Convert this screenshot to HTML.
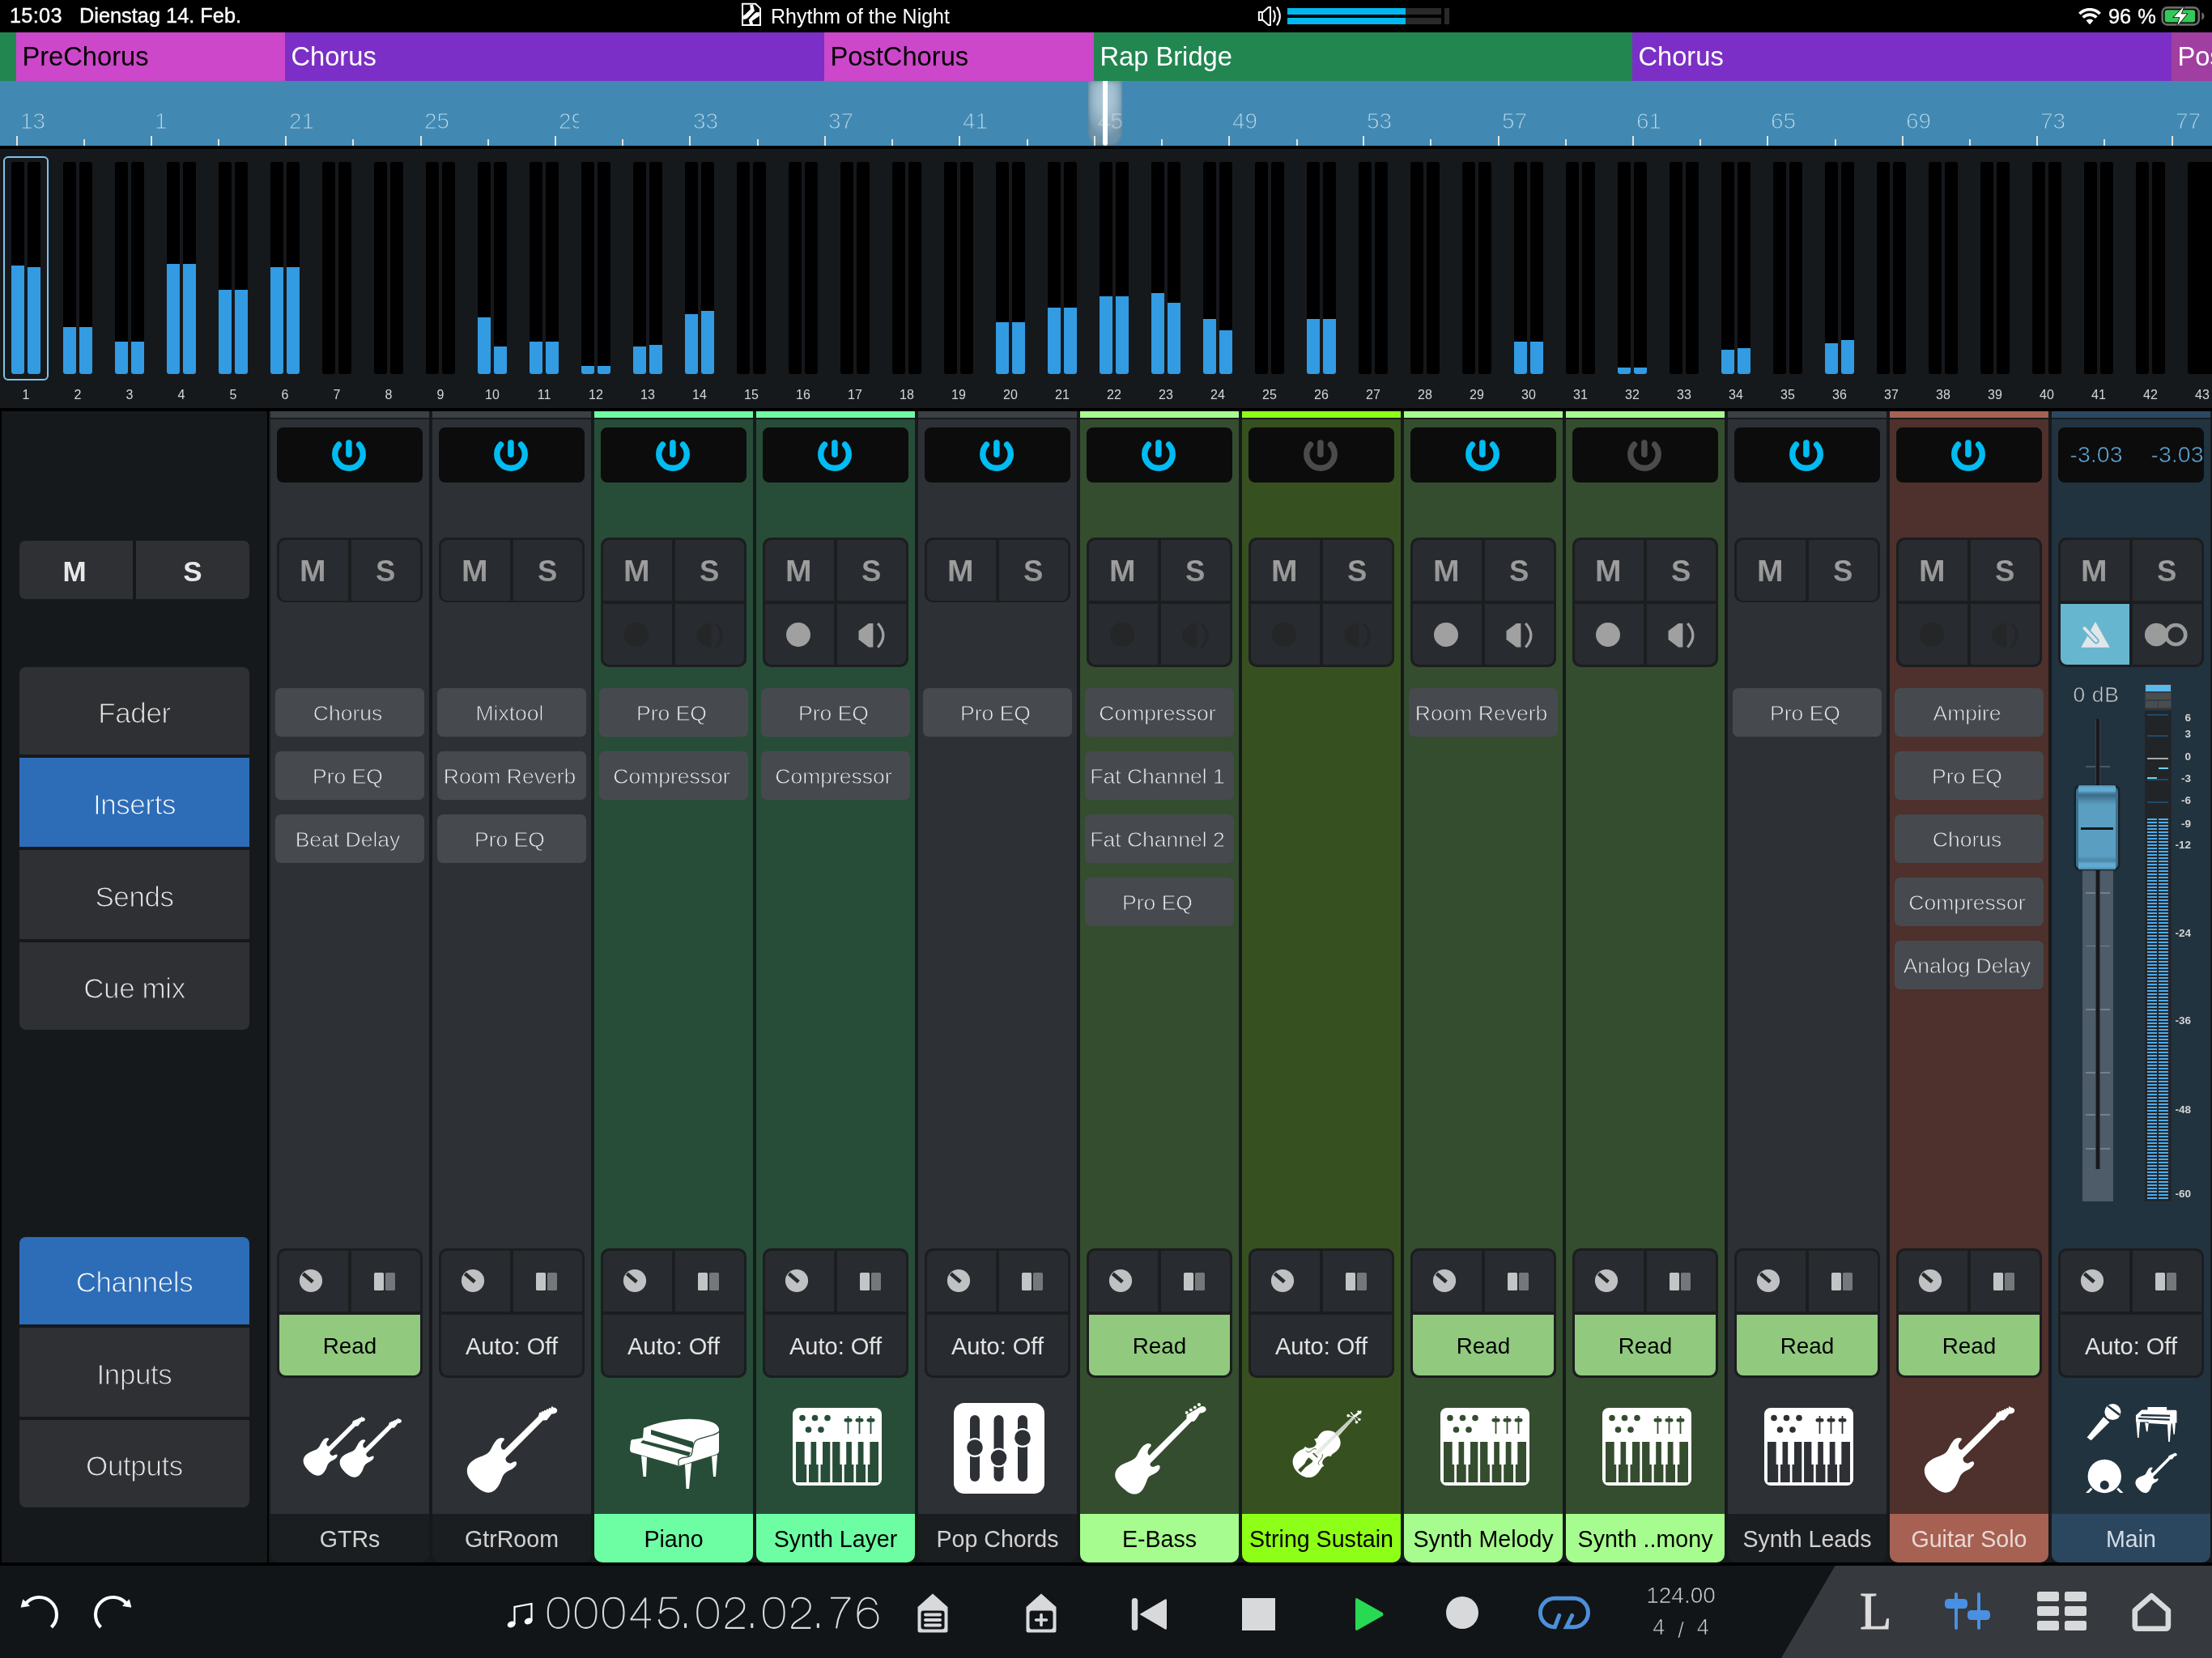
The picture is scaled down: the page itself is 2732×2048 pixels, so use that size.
<!DOCTYPE html><html><head><meta charset="utf-8"><title>Mixer</title><style>
*{box-sizing:border-box;margin:0;padding:0}
html,body{width:2732px;height:2048px;overflow:hidden;background:#16191c}
body{position:relative;font-family:"Liberation Sans",sans-serif;color:#fff;will-change:transform}
div,svg,span{position:absolute}
.t{white-space:nowrap;text-align:center}
.mk{top:40px;height:60px;font-size:32.7px;line-height:60px;white-space:nowrap;overflow:hidden;padding-left:7.4px}
.rl{top:133px;height:34px;font-size:28px;line-height:34px;color:#c2dbea;white-space:nowrap;overflow:hidden;-webkit-text-stroke:1.1px #4189b2}
.tk{width:2px;background:#e6e2da}
.mb{width:16px;top:200px;height:262px;background:#000;border-radius:3px;overflow:hidden}
.mb i{position:absolute;left:0;right:0;bottom:0;background:#329be2;display:block}
.ml{top:477.2px;width:64px;height:22px;font-size:16px;line-height:22px;color:#d2d6da;text-align:center}
.lb{left:24px;width:284px;background:#2f3033;color:#e4e4e4;font-size:35px;letter-spacing:-0.4px;text-align:center;-webkit-text-stroke:1px #2f3033}
.lb.on{background:#2d6cb7;color:#f4f8fc;-webkit-text-stroke:1px #2d6cb7}
.pw{width:180px;height:68px;top:528px;background:#0c0c0c;border-radius:8px}
.grp{width:180px;background:#1c1d1f;border-radius:10px}
.cell{background:#282b30}
.ms{font-weight:bold;font-size:36.5px;color:#999;text-align:center;line-height:75px}
.g{position:static;display:inline-block;background:linear-gradient(180deg,#a3a3a3 25%,#909090 75%);-webkit-background-clip:text;background-clip:text;color:transparent}
.slot{width:184px;height:60px;background:#464a4e;border-radius:7px;color:#eaecee;font-size:26.5px;line-height:63px;text-align:center;white-space:nowrap;-webkit-text-stroke:0.8px #464a4e;padding-right:5px}
.auto{font-size:29px;line-height:75px;text-align:center;white-space:nowrap}
.nm{font-size:28.6px;line-height:62px;text-align:center;white-space:nowrap;height:60px;top:1870px;width:196px;border-radius:0 0 10px 10px}
.sc{font-size:13.5px;font-weight:bold;color:#d4d4d4;text-align:right;width:40px;height:14px;line-height:14px;left:2666px}
</style></head><body>
<div style="left:0px;top:0px;width:2732px;height:40px;background:#000"></div>
<div class="t" style="left:12px;top:3.3px;height:32px;line-height:32px;font-size:25.3px;color:#fff;text-align:left;-webkit-text-stroke:0.4px #fff;letter-spacing:0.3px">15:03</div>
<div class="t" style="left:98px;top:3.3px;height:32px;line-height:32px;font-size:25.3px;color:#fff;text-align:left;-webkit-text-stroke:0.4px #fff;letter-spacing:0.02px">Dienstag 14. Feb.</div>
<svg style="left:905px;top:0px" width="80" height="40" viewBox="0 0 2212 1106"><path d="M333 133 H778 L940 287 V857 H333 Z" fill="none" stroke="#fff" stroke-width="56" stroke-linejoin="miter"/><path d="M585 165 L695 165 L745 370 L505 620 L430 655 L362 662 L362 530 L420 500 L605 320 Z" fill="#fff"/><path d="M908 418 L908 548 L665 715 L692 828 L580 828 L545 680 L600 610 L760 450 L800 425 Z" fill="#fff"/></svg>
<div class="t" style="left:952px;top:4px;height:32px;line-height:32px;font-size:25px;color:#fff;text-align:left">Rhythm of the Night</div>
<svg style="left:1540px;top:0px" width="80" height="40" viewBox="0 0 2212 1106" fill="none" stroke="#fff" stroke-width="55"><rect x="412" y="412" width="110" height="276"/><path d="M545 420 L735 248 H800 V858 H735 L545 685" stroke-linejoin="miter"/><path d="M905 350 Q1020 555 905 755" stroke-width="58"/><path d="M1022 240 Q1235 555 1022 868" stroke-width="58"/></svg>
<div style="left:1590px;top:10px;width:190px;height:8px;background:#2a2a2a"></div>
<div style="left:1590px;top:22px;width:190px;height:8px;background:#2a2a2a"></div>
<div style="left:1590px;top:10px;width:146px;height:8px;background:#00b8f0"></div>
<div style="left:1590px;top:22px;width:146px;height:8px;background:#00b8f0"></div>
<div style="left:1784px;top:10px;width:6px;height:20px;background:#2a2a2a"></div>
<svg style="left:2567px;top:9.8px" width="28" height="20.6" viewBox="0 0 30 22"><path d="M15 21.8 L10.2 16.4 A7 7 0 0 1 19.8 16.4 Z" fill="#fff"/><path d="M6.1 12.3 A12.6 12.6 0 0 1 23.9 12.3" fill="none" stroke="#fff" stroke-width="3.9"/><path d="M1.5 7.4 A19 19 0 0 1 28.5 7.4" fill="none" stroke="#fff" stroke-width="3.9"/></svg>
<div class="t" style="left:2604px;top:4px;height:32px;line-height:32px;font-size:25.4px;color:#fff;text-align:left;-webkit-text-stroke:0.35px #fff;word-spacing:1px">96 %</div>
<svg style="left:2668px;top:7px" width="56" height="26" viewBox="0 0 56 26"><rect x="2.7" y="2.4" width="45" height="21" rx="6" fill="none" stroke="#6c6c6c" stroke-width="2.6"/><rect x="5.6" y="5.2" width="37.6" height="15.4" rx="3" fill="#34c759"/><path d="M51.3 8.3 Q54.4 9.6 54.4 12.9 Q54.4 16.2 51.3 17.5 Z" fill="#6c6c6c"/><path d="M29.5 0.7 L16.8 14.2 H24.5 L20.9 25.1 L33.1 10.2 H25.8 Z" fill="#fff" stroke="#000" stroke-width="1.5" stroke-linejoin="miter" paint-order="stroke"/></svg>
<div style="left:0px;top:40px;width:2732px;height:60px;background:#218650"></div>
<div class="mk" style="left:20px;width:332px;background:#cc47c9;color:#000">PreChorus</div>
<div class="mk" style="left:352px;width:666px;background:#7b2fc6;color:#fff">Chorus</div>
<div class="mk" style="left:1018px;width:333px;background:#cc47c9;color:#000">PostChorus</div>
<div class="mk" style="left:1351px;width:665px;background:#218650;color:#fff">Rap Bridge</div>
<div class="mk" style="left:2016px;width:666px;background:#7b2fc6;color:#fff">Chorus</div>
<div class="mk" style="left:2682px;width:50px;background:#a03fa1;color:#fff">Pos</div>
<div style="left:0px;top:100px;width:2732px;height:80px;background:#4189b2"></div>
<div style="left:0px;top:180px;width:2732px;height:4px;background:#000"></div>
<div style="left:1344px;top:100px;width:42px;height:80px;border-radius:0 0 15px 15px;background:radial-gradient(ellipse 27px 50px at 50% 26%,#b2ccdb 0%,#a2bfcf 40%,#86a7bb 75%,#6f93aa 100%);box-shadow:inset 0 0 5px rgba(50,95,125,0.55)"></div>
<div class="tk" style="left:20.0px;top:168px;height:12px"></div>
<div class="tk" style="left:103.0px;top:172px;height:8px"></div>
<div class="tk" style="left:186.0px;top:168px;height:12px"></div>
<div class="tk" style="left:269.0px;top:172px;height:8px"></div>
<div class="tk" style="left:352.0px;top:168px;height:12px"></div>
<div class="tk" style="left:435.0px;top:172px;height:8px"></div>
<div class="tk" style="left:519.0px;top:168px;height:12px"></div>
<div class="tk" style="left:602.0px;top:172px;height:8px"></div>
<div class="tk" style="left:685.0px;top:168px;height:12px"></div>
<div class="tk" style="left:768.0px;top:172px;height:8px"></div>
<div class="tk" style="left:851.0px;top:168px;height:12px"></div>
<div class="tk" style="left:935.0px;top:172px;height:8px"></div>
<div class="tk" style="left:1018.0px;top:168px;height:12px"></div>
<div class="tk" style="left:1101.0px;top:172px;height:8px"></div>
<div class="tk" style="left:1184.0px;top:168px;height:12px"></div>
<div class="tk" style="left:1268.0px;top:172px;height:8px"></div>
<div class="tk" style="left:1351.0px;top:168px;height:12px"></div>
<div class="tk" style="left:1434.0px;top:172px;height:8px"></div>
<div class="tk" style="left:1517.0px;top:168px;height:12px"></div>
<div class="tk" style="left:1601.0px;top:172px;height:8px"></div>
<div class="tk" style="left:1683.0px;top:168px;height:12px"></div>
<div class="tk" style="left:1766.0px;top:172px;height:8px"></div>
<div class="tk" style="left:1850.0px;top:168px;height:12px"></div>
<div class="tk" style="left:1933.0px;top:172px;height:8px"></div>
<div class="tk" style="left:2016.0px;top:168px;height:12px"></div>
<div class="tk" style="left:2099.0px;top:172px;height:8px"></div>
<div class="tk" style="left:2182.0px;top:168px;height:12px"></div>
<div class="tk" style="left:2266.0px;top:172px;height:8px"></div>
<div class="tk" style="left:2349.0px;top:168px;height:12px"></div>
<div class="tk" style="left:2432.0px;top:172px;height:8px"></div>
<div class="tk" style="left:2515.0px;top:168px;height:12px"></div>
<div class="tk" style="left:2598.0px;top:172px;height:8px"></div>
<div class="tk" style="left:2682.0px;top:168px;height:12px"></div>
<div class="rl" style="left:25.0px;width:60px">13</div>
<div class="rl" style="left:191.0px;width:15px">17</div>
<div class="rl" style="left:357.0px;width:60px">21</div>
<div class="rl" style="left:524.0px;width:60px">25</div>
<div class="rl" style="left:690.0px;width:25px">29</div>
<div class="rl" style="left:856.0px;width:60px">33</div>
<div class="rl" style="left:1023.0px;width:60px">37</div>
<div class="rl" style="left:1189.0px;width:60px">41</div>
<div class="rl" style="left:1356.0px;width:60px;-webkit-text-stroke:0;color:rgba(225,225,225,0.42)">45</div>
<div class="rl" style="left:1522.0px;width:60px">49</div>
<div class="rl" style="left:1688.0px;width:60px">53</div>
<div class="rl" style="left:1855.0px;width:60px">57</div>
<div class="rl" style="left:2021.0px;width:60px">61</div>
<div class="rl" style="left:2187.0px;width:60px">65</div>
<div class="rl" style="left:2354.0px;width:60px">69</div>
<div class="rl" style="left:2520.0px;width:60px">73</div>
<div class="rl" style="left:2687.0px;width:60px">77</div>
<div style="left:1361.8px;top:100px;width:6.3px;height:80px;background:#fff;border-radius:0 0 3px 3px"></div>
<div style="left:0px;top:504px;width:2732px;height:4px;background:#000"></div>
<div class="mb" style="left:14px"><i style="height:134px"></i></div>
<div class="mb" style="left:34px"><i style="height:132px"></i></div>
<div class="ml" style="left:0px">1</div>
<div class="mb" style="left:78px"><i style="height:58px"></i></div>
<div class="mb" style="left:98px"><i style="height:58px"></i></div>
<div class="ml" style="left:64px">2</div>
<div class="mb" style="left:142px"><i style="height:40px"></i></div>
<div class="mb" style="left:162px"><i style="height:40px"></i></div>
<div class="ml" style="left:128px">3</div>
<div class="mb" style="left:206px"><i style="height:136px"></i></div>
<div class="mb" style="left:226px"><i style="height:136px"></i></div>
<div class="ml" style="left:192px">4</div>
<div class="mb" style="left:270px"><i style="height:104px"></i></div>
<div class="mb" style="left:290px"><i style="height:104px"></i></div>
<div class="ml" style="left:256px">5</div>
<div class="mb" style="left:334px"><i style="height:132px"></i></div>
<div class="mb" style="left:354px"><i style="height:132px"></i></div>
<div class="ml" style="left:320px">6</div>
<div class="mb" style="left:398px"><i style="height:0px"></i></div>
<div class="mb" style="left:418px"><i style="height:0px"></i></div>
<div class="ml" style="left:384px">7</div>
<div class="mb" style="left:462px"><i style="height:0px"></i></div>
<div class="mb" style="left:482px"><i style="height:0px"></i></div>
<div class="ml" style="left:448px">8</div>
<div class="mb" style="left:526px"><i style="height:0px"></i></div>
<div class="mb" style="left:546px"><i style="height:0px"></i></div>
<div class="ml" style="left:512px">9</div>
<div class="mb" style="left:590px"><i style="height:70px"></i></div>
<div class="mb" style="left:610px"><i style="height:34px"></i></div>
<div class="ml" style="left:576px">10</div>
<div class="mb" style="left:654px"><i style="height:40px"></i></div>
<div class="mb" style="left:674px"><i style="height:40px"></i></div>
<div class="ml" style="left:640px">11</div>
<div class="mb" style="left:718px"><i style="height:10px"></i></div>
<div class="mb" style="left:738px"><i style="height:10px"></i></div>
<div class="ml" style="left:704px">12</div>
<div class="mb" style="left:782px"><i style="height:34px"></i></div>
<div class="mb" style="left:802px"><i style="height:36px"></i></div>
<div class="ml" style="left:768px">13</div>
<div class="mb" style="left:846px"><i style="height:74px"></i></div>
<div class="mb" style="left:866px"><i style="height:78px"></i></div>
<div class="ml" style="left:832px">14</div>
<div class="mb" style="left:910px"><i style="height:0px"></i></div>
<div class="mb" style="left:930px"><i style="height:0px"></i></div>
<div class="ml" style="left:896px">15</div>
<div class="mb" style="left:974px"><i style="height:0px"></i></div>
<div class="mb" style="left:994px"><i style="height:0px"></i></div>
<div class="ml" style="left:960px">16</div>
<div class="mb" style="left:1038px"><i style="height:0px"></i></div>
<div class="mb" style="left:1058px"><i style="height:0px"></i></div>
<div class="ml" style="left:1024px">17</div>
<div class="mb" style="left:1102px"><i style="height:0px"></i></div>
<div class="mb" style="left:1122px"><i style="height:0px"></i></div>
<div class="ml" style="left:1088px">18</div>
<div class="mb" style="left:1166px"><i style="height:0px"></i></div>
<div class="mb" style="left:1186px"><i style="height:0px"></i></div>
<div class="ml" style="left:1152px">19</div>
<div class="mb" style="left:1230px"><i style="height:64px"></i></div>
<div class="mb" style="left:1250px"><i style="height:64px"></i></div>
<div class="ml" style="left:1216px">20</div>
<div class="mb" style="left:1294px"><i style="height:82px"></i></div>
<div class="mb" style="left:1314px"><i style="height:82px"></i></div>
<div class="ml" style="left:1280px">21</div>
<div class="mb" style="left:1358px"><i style="height:96px"></i></div>
<div class="mb" style="left:1378px"><i style="height:96px"></i></div>
<div class="ml" style="left:1344px">22</div>
<div class="mb" style="left:1422px"><i style="height:100px"></i></div>
<div class="mb" style="left:1442px"><i style="height:88px"></i></div>
<div class="ml" style="left:1408px">23</div>
<div class="mb" style="left:1486px"><i style="height:68px"></i></div>
<div class="mb" style="left:1506px"><i style="height:54px"></i></div>
<div class="ml" style="left:1472px">24</div>
<div class="mb" style="left:1550px"><i style="height:0px"></i></div>
<div class="mb" style="left:1570px"><i style="height:0px"></i></div>
<div class="ml" style="left:1536px">25</div>
<div class="mb" style="left:1614px"><i style="height:68px"></i></div>
<div class="mb" style="left:1634px"><i style="height:68px"></i></div>
<div class="ml" style="left:1600px">26</div>
<div class="mb" style="left:1678px"><i style="height:0px"></i></div>
<div class="mb" style="left:1698px"><i style="height:0px"></i></div>
<div class="ml" style="left:1664px">27</div>
<div class="mb" style="left:1742px"><i style="height:0px"></i></div>
<div class="mb" style="left:1762px"><i style="height:0px"></i></div>
<div class="ml" style="left:1728px">28</div>
<div class="mb" style="left:1806px"><i style="height:0px"></i></div>
<div class="mb" style="left:1826px"><i style="height:0px"></i></div>
<div class="ml" style="left:1792px">29</div>
<div class="mb" style="left:1870px"><i style="height:40px"></i></div>
<div class="mb" style="left:1890px"><i style="height:40px"></i></div>
<div class="ml" style="left:1856px">30</div>
<div class="mb" style="left:1934px"><i style="height:0px"></i></div>
<div class="mb" style="left:1954px"><i style="height:0px"></i></div>
<div class="ml" style="left:1920px">31</div>
<div class="mb" style="left:1998px"><i style="height:8px"></i></div>
<div class="mb" style="left:2018px"><i style="height:8px"></i></div>
<div class="ml" style="left:1984px">32</div>
<div class="mb" style="left:2062px"><i style="height:0px"></i></div>
<div class="mb" style="left:2082px"><i style="height:0px"></i></div>
<div class="ml" style="left:2048px">33</div>
<div class="mb" style="left:2126px"><i style="height:30px"></i></div>
<div class="mb" style="left:2146px"><i style="height:32px"></i></div>
<div class="ml" style="left:2112px">34</div>
<div class="mb" style="left:2190px"><i style="height:0px"></i></div>
<div class="mb" style="left:2210px"><i style="height:0px"></i></div>
<div class="ml" style="left:2176px">35</div>
<div class="mb" style="left:2254px"><i style="height:38px"></i></div>
<div class="mb" style="left:2274px"><i style="height:42px"></i></div>
<div class="ml" style="left:2240px">36</div>
<div class="mb" style="left:2318px"><i style="height:0px"></i></div>
<div class="mb" style="left:2338px"><i style="height:0px"></i></div>
<div class="ml" style="left:2304px">37</div>
<div class="mb" style="left:2382px"><i style="height:0px"></i></div>
<div class="mb" style="left:2402px"><i style="height:0px"></i></div>
<div class="ml" style="left:2368px">38</div>
<div class="mb" style="left:2446px"><i style="height:0px"></i></div>
<div class="mb" style="left:2466px"><i style="height:0px"></i></div>
<div class="ml" style="left:2432px">39</div>
<div class="mb" style="left:2510px"><i style="height:0px"></i></div>
<div class="mb" style="left:2530px"><i style="height:0px"></i></div>
<div class="ml" style="left:2496px">40</div>
<div class="mb" style="left:2574px"><i style="height:0px"></i></div>
<div class="mb" style="left:2594px"><i style="height:0px"></i></div>
<div class="ml" style="left:2560px">41</div>
<div class="mb" style="left:2638px"><i style="height:0px"></i></div>
<div class="mb" style="left:2658px"><i style="height:0px"></i></div>
<div class="ml" style="left:2624px">42</div>
<div class="mb" style="left:2702px;width:36px"></div>
<div class="ml" style="left:2688px">43</div>
<div style="left:4px;top:193px;width:56px;height:277px;border:2px solid #7cc4ea;border-radius:6px"></div>
<div style="left:0px;top:508px;width:2px;height:1422px;background:#000"></div>
<div style="left:330px;top:508px;width:2px;height:1422px;background:#000"></div>
<div style="left:24px;top:668px;width:140px;height:72px;background:#2f3033;border-radius:7px 0 0 7px;font-weight:bold;font-size:35px;line-height:76px;text-align:center;color:#e8e8e8;padding-right:4px">M</div>
<div style="left:168px;top:668px;width:140px;height:72px;background:#2f3033;border-radius:0 7px 7px 0;font-weight:bold;font-size:35px;line-height:76px;text-align:center;color:#e8e8e8">S</div>
<div class="lb" style="top:824px;height:108px;line-height:114.5px;border-radius:8px 8px 0 0">Fader</div>
<div class="lb on" style="top:936px;height:110px;line-height:116.5px;">Inserts</div>
<div class="lb" style="top:1050px;height:110px;line-height:116.5px;">Sends</div>
<div class="lb" style="top:1164px;height:108px;line-height:114.5px;border-radius:0 0 8px 8px">Cue mix</div>
<div class="lb on" style="top:1528px;height:108px;line-height:112px;border-radius:8px 8px 0 0">Channels</div>
<div class="lb" style="top:1640px;height:110px;line-height:116.5px;">Inputs</div>
<div class="lb" style="top:1754px;height:108px;line-height:114.5px;border-radius:0 0 8px 8px">Outputs</div>
<div style="left:334px;top:508px;width:196px;height:8px;background:#3c3f44"></div>
<div style="left:334px;top:516px;width:196px;height:2px;background:#181c1e"></div>
<div style="left:334px;top:518px;width:196px;height:1352px;background:#2d3035"></div>
<div class="pw" style="left:342px"></div>
<svg style="left:405px;top:535.0px" width="52" height="52" viewBox="-26 -26 52 52"><path d="M-12.6 -11.8 A17.25 17.25 0 1 0 12.6 -11.8" fill="none" stroke="#00bcf2" stroke-width="7.4" stroke-linecap="round"/><path d="M-0.1 -13.9 V0.2" stroke="#00bcf2" stroke-width="7.5" stroke-linecap="round"/></svg>
<div class="grp" style="left:342px;top:664px;height:80px"></div>
<div class="cell ms" style="left:344.6px;top:666.6px;width:85.6px;height:75.2px;border-radius:8px 0 0 8px;line-height:77.2px;padding-right:3px"><span class="g" style="transform:scaleX(1.07)">M</span></div>
<div class="cell ms" style="left:434px;top:666.6px;width:85.4px;height:75.2px;border-radius:0 8px 8px 0;line-height:77.2px;padding-right:1px"><span class="g">S</span></div>
<div class="slot" style="left:340px;top:850px">Chorus</div>
<div class="slot" style="left:340px;top:928px">Pro EQ</div>
<div class="slot" style="left:340px;top:1006px">Beat Delay</div>
<div class="grp" style="left:342px;top:1542px;height:160px"></div>
<div class="cell" style="left:344.6px;top:1544.6px;width:85.6px;height:75.4px;border-radius:8px 0 0 0"></div>
<div class="cell" style="left:434px;top:1544.6px;width:85.4px;height:75.4px;border-radius:0 8px 0 0"></div>
<svg style="left:368.8px;top:1566.8px" width="30" height="30" viewBox="-15 -15 30 30"><circle r="14.1" fill="#c0c1c2"/><path d="M2.3 1.5 L-9.7 -8.8" stroke="#282b30" stroke-width="4.6"/></svg>
<div style="left:462px;top:1572px;width:12px;height:22px;background:#c3c4c5;border-radius:1.5px"></div>
<div style="left:476px;top:1572px;width:12px;height:22px;background:#74787b;border-radius:1.5px"></div>
<div class="cell auto" style="left:344.6px;top:1624px;width:174.8px;height:75.4px;border-radius:0 0 8px 8px;background:#91ca7f;color:#000;line-height:78px;font-size:27.8px">Read</div>
<svg style="left:363px;top:1738px" width="103" height="96" viewBox="0 0 1776 1658" fill="#fff"><path d="M750 835 C700 850 665 770 735 705 C765 675 725 648 670 670 C600 700 570 800 530 860 C480 930 380 930 280 1000 C180 1070 180 1180 240 1270 C300 1360 400 1450 500 1465 C600 1475 670 1370 700 1280 C730 1190 760 1170 830 1135 C890 1105 930 1060 925 1030 C915 990 870 1020 840 1035 C800 1045 745 1000 770 950 L1310 410 L1365 405 L1440 310 C1470 320 1520 300 1518 262 C1515 225 1470 210 1440 225 L1255 305 L1240 350 Z"/><circle cx="1268" cy="302" r="13"/><circle cx="1303" cy="286" r="13"/><circle cx="1338" cy="270" r="13"/><circle cx="1373" cy="253" r="13"/><circle cx="1408" cy="237" r="13"/><circle cx="1443" cy="216" r="13"/></svg>
<svg style="left:407.5px;top:1739.5px" width="103" height="96" viewBox="0 0 1776 1658" fill="#fff"><path d="M750 835 C700 850 665 770 735 705 C765 675 725 648 670 670 C600 700 570 800 530 860 C480 930 380 930 280 1000 C180 1070 180 1180 240 1270 C300 1360 400 1450 500 1465 C600 1475 670 1370 700 1280 C730 1190 760 1170 830 1135 C890 1105 930 1060 925 1030 C915 990 870 1020 840 1035 C800 1045 745 1000 770 950 L1310 410 L1365 405 L1440 310 C1470 320 1520 300 1518 262 C1515 225 1470 210 1440 225 L1255 305 L1240 350 Z"/><circle cx="1268" cy="302" r="13"/><circle cx="1303" cy="286" r="13"/><circle cx="1338" cy="270" r="13"/><circle cx="1373" cy="253" r="13"/><circle cx="1408" cy="237" r="13"/><circle cx="1443" cy="216" r="13"/></svg>
<div class="nm" style="left:334px;background:#1b1e21;color:#d2d2d2">GTRs</div>
<div style="left:534px;top:508px;width:196px;height:8px;background:#3c3f44"></div>
<div style="left:534px;top:516px;width:196px;height:2px;background:#181c1e"></div>
<div style="left:534px;top:518px;width:196px;height:1352px;background:#2d3035"></div>
<div class="pw" style="left:542px"></div>
<svg style="left:605px;top:535.0px" width="52" height="52" viewBox="-26 -26 52 52"><path d="M-12.6 -11.8 A17.25 17.25 0 1 0 12.6 -11.8" fill="none" stroke="#00bcf2" stroke-width="7.4" stroke-linecap="round"/><path d="M-0.1 -13.9 V0.2" stroke="#00bcf2" stroke-width="7.5" stroke-linecap="round"/></svg>
<div class="grp" style="left:542px;top:664px;height:80px"></div>
<div class="cell ms" style="left:544.6px;top:666.6px;width:85.6px;height:75.2px;border-radius:8px 0 0 8px;line-height:77.2px;padding-right:3px"><span class="g" style="transform:scaleX(1.07)">M</span></div>
<div class="cell ms" style="left:634px;top:666.6px;width:85.4px;height:75.2px;border-radius:0 8px 8px 0;line-height:77.2px;padding-right:1px"><span class="g">S</span></div>
<div class="slot" style="left:540px;top:850px">Mixtool</div>
<div class="slot" style="left:540px;top:928px">Room Reverb</div>
<div class="slot" style="left:540px;top:1006px">Pro EQ</div>
<div class="grp" style="left:542px;top:1542px;height:160px"></div>
<div class="cell" style="left:544.6px;top:1544.6px;width:85.6px;height:75.4px;border-radius:8px 0 0 0"></div>
<div class="cell" style="left:634px;top:1544.6px;width:85.4px;height:75.4px;border-radius:0 8px 0 0"></div>
<svg style="left:568.8px;top:1566.8px" width="30" height="30" viewBox="-15 -15 30 30"><circle r="14.1" fill="#c0c1c2"/><path d="M2.3 1.5 L-9.7 -8.8" stroke="#282b30" stroke-width="4.6"/></svg>
<div style="left:662px;top:1572px;width:12px;height:22px;background:#c3c4c5;border-radius:1.5px"></div>
<div style="left:676px;top:1572px;width:12px;height:22px;background:#74787b;border-radius:1.5px"></div>
<div class="cell auto" style="left:544.6px;top:1624px;width:174.8px;height:75.4px;border-radius:0 0 8px 8px;color:#e2e2e2;line-height:78px">Auto: Off</div>
<svg style="left:560px;top:1720px" width="150" height="140" viewBox="0 0 1776 1658" fill="#fff"><path d="M750 835 C700 850 665 770 735 705 C765 675 725 648 670 670 C600 700 570 800 530 860 C480 930 380 930 280 1000 C180 1070 180 1180 240 1270 C300 1360 400 1450 500 1465 C600 1475 670 1370 700 1280 C730 1190 760 1170 830 1135 C890 1105 930 1060 925 1030 C915 990 870 1020 840 1035 C800 1045 745 1000 770 950 L1310 410 L1365 405 L1440 310 C1470 320 1520 300 1518 262 C1515 225 1470 210 1440 225 L1255 305 L1240 350 Z"/><circle cx="1268" cy="302" r="13"/><circle cx="1303" cy="286" r="13"/><circle cx="1338" cy="270" r="13"/><circle cx="1373" cy="253" r="13"/><circle cx="1408" cy="237" r="13"/><circle cx="1443" cy="216" r="13"/></svg>
<div class="nm" style="left:534px;background:#1b1e21;color:#d2d2d2">GtrRoom</div>
<div style="left:734px;top:508px;width:196px;height:8px;background:#6dfda3"></div>
<div style="left:734px;top:516px;width:196px;height:2px;background:#181c1e"></div>
<div style="left:734px;top:518px;width:196px;height:1352px;background:#274d38"></div>
<div class="pw" style="left:742px"></div>
<svg style="left:805px;top:535.0px" width="52" height="52" viewBox="-26 -26 52 52"><path d="M-12.6 -11.8 A17.25 17.25 0 1 0 12.6 -11.8" fill="none" stroke="#00bcf2" stroke-width="7.4" stroke-linecap="round"/><path d="M-0.1 -13.9 V0.2" stroke="#00bcf2" stroke-width="7.5" stroke-linecap="round"/></svg>
<div class="grp" style="left:742px;top:664px;height:160px"></div>
<div class="cell ms" style="left:744.6px;top:666.6px;width:85.6px;height:75.2px;border-radius:8px 0 0 0;line-height:77.2px;padding-right:3px"><span class="g" style="transform:scaleX(1.07)">M</span></div>
<div class="cell ms" style="left:834px;top:666.6px;width:85.4px;height:75.2px;border-radius:0 8px 0 0;line-height:77.2px;padding-right:1px"><span class="g">S</span></div>
<div class="cell" style="left:744.6px;top:746px;width:85.6px;height:75.4px;border-radius:0 0 0 8px"></div>
<div class="cell" style="left:834px;top:746px;width:85.4px;height:75.4px;border-radius:0 0 8px 0"></div>
<svg style="left:770px;top:768px" width="32" height="32" viewBox="-16 -16 32 32"><circle r="15" fill="#242628"/></svg>
<svg style="left:856.5px;top:766px" width="40" height="36" viewBox="-20 -18 40 36"><path d="M-16.5 -4.8 L-4 -14 L1.4 -14 L1.4 15.5 L-4 15.5 L-16.5 6 Z" fill="#242628"/><path d="M7.2 -14 Q20.5 0.7 7.2 15.5" fill="none" stroke="#242628" stroke-width="3.2"/></svg>
<div class="slot" style="left:740px;top:850px">Pro EQ</div>
<div class="slot" style="left:740px;top:928px">Compressor</div>
<div class="grp" style="left:742px;top:1542px;height:160px"></div>
<div class="cell" style="left:744.6px;top:1544.6px;width:85.6px;height:75.4px;border-radius:8px 0 0 0"></div>
<div class="cell" style="left:834px;top:1544.6px;width:85.4px;height:75.4px;border-radius:0 8px 0 0"></div>
<svg style="left:768.8px;top:1566.8px" width="30" height="30" viewBox="-15 -15 30 30"><circle r="14.1" fill="#c0c1c2"/><path d="M2.3 1.5 L-9.7 -8.8" stroke="#282b30" stroke-width="4.6"/></svg>
<div style="left:862px;top:1572px;width:12px;height:22px;background:#c3c4c5;border-radius:1.5px"></div>
<div style="left:876px;top:1572px;width:12px;height:22px;background:#74787b;border-radius:1.5px"></div>
<div class="cell auto" style="left:744.6px;top:1624px;width:174.8px;height:75.4px;border-radius:0 0 8px 8px;color:#e2e2e2;line-height:78px">Auto: Off</div>
<svg style="left:777.5px;top:1752px" width="112" height="88" viewBox="0 0 112 88"><path d="M17 12 C40 2 75 -2 95 3 C105 5 111 9 110 16 L110 40 C110 43 108 44 105 45 L63 58 C60 59 58 58 55 57 L2 42 C0 41 0 39 0 37 L1 29 C1 27 2 26 5 26 L16 24 Z" fill="#fff"/><path d="M26 14 L78 29 L78 37 L26 20 Z" fill="#274d38"/><path d="M16 27 L75 42 L73 47 L13 30 Z" fill="#274d38"/><path d="M111 15 C108 22 90 22 82 27 C77 30 78 40 76 45 C74 50 62 46 60 52 L60 58" fill="none" stroke="#274d38" stroke-width="1.3"/><path d="M14 46 L21 48 L20 72 L16.5 72 Z" fill="#fff"/><path d="M68 57 L76 55 L73 87 L69.5 87 Z" fill="#fff"/><path d="M101 47 L108 45 L106 72 L103 72 Z" fill="#fff"/></svg>
<div class="nm" style="left:734px;background:#6dfda3;color:#000">Piano</div>
<div style="left:934px;top:508px;width:196px;height:8px;background:#6dfda3"></div>
<div style="left:934px;top:516px;width:196px;height:2px;background:#181c1e"></div>
<div style="left:934px;top:518px;width:196px;height:1352px;background:#274d38"></div>
<div class="pw" style="left:942px"></div>
<svg style="left:1005px;top:535.0px" width="52" height="52" viewBox="-26 -26 52 52"><path d="M-12.6 -11.8 A17.25 17.25 0 1 0 12.6 -11.8" fill="none" stroke="#00bcf2" stroke-width="7.4" stroke-linecap="round"/><path d="M-0.1 -13.9 V0.2" stroke="#00bcf2" stroke-width="7.5" stroke-linecap="round"/></svg>
<div class="grp" style="left:942px;top:664px;height:160px"></div>
<div class="cell ms" style="left:944.6px;top:666.6px;width:85.6px;height:75.2px;border-radius:8px 0 0 0;line-height:77.2px;padding-right:3px"><span class="g" style="transform:scaleX(1.07)">M</span></div>
<div class="cell ms" style="left:1034px;top:666.6px;width:85.4px;height:75.2px;border-radius:0 8px 0 0;line-height:77.2px;padding-right:1px"><span class="g">S</span></div>
<div class="cell" style="left:944.6px;top:746px;width:85.6px;height:75.4px;border-radius:0 0 0 8px"></div>
<div class="cell" style="left:1034px;top:746px;width:85.4px;height:75.4px;border-radius:0 0 8px 0"></div>
<svg style="left:970px;top:768px" width="32" height="32" viewBox="-16 -16 32 32"><circle r="15" fill="#a0a0a0"/></svg>
<svg style="left:1056.5px;top:766px" width="40" height="36" viewBox="-20 -18 40 36"><path d="M-16.5 -4.8 L-4 -14 L1.4 -14 L1.4 15.5 L-4 15.5 L-16.5 6 Z" fill="#a0a0a0"/><path d="M7.2 -14 Q20.5 0.7 7.2 15.5" fill="none" stroke="#a0a0a0" stroke-width="3.2"/></svg>
<div class="slot" style="left:940px;top:850px">Pro EQ</div>
<div class="slot" style="left:940px;top:928px">Compressor</div>
<div class="grp" style="left:942px;top:1542px;height:160px"></div>
<div class="cell" style="left:944.6px;top:1544.6px;width:85.6px;height:75.4px;border-radius:8px 0 0 0"></div>
<div class="cell" style="left:1034px;top:1544.6px;width:85.4px;height:75.4px;border-radius:0 8px 0 0"></div>
<svg style="left:968.8px;top:1566.8px" width="30" height="30" viewBox="-15 -15 30 30"><circle r="14.1" fill="#c0c1c2"/><path d="M2.3 1.5 L-9.7 -8.8" stroke="#282b30" stroke-width="4.6"/></svg>
<div style="left:1062px;top:1572px;width:12px;height:22px;background:#c3c4c5;border-radius:1.5px"></div>
<div style="left:1076px;top:1572px;width:12px;height:22px;background:#74787b;border-radius:1.5px"></div>
<div class="cell auto" style="left:944.6px;top:1624px;width:174.8px;height:75.4px;border-radius:0 0 8px 8px;color:#e2e2e2;line-height:78px">Auto: Off</div>
<svg style="left:979px;top:1739px" width="110" height="96" viewBox="0 0 110 96"><defs><mask id="msk1"><rect x="0" y="0" width="110" height="96" rx="8" fill="#fff"/><circle cx="12" cy="12.5" r="3.8" fill="#000"/><circle cx="27.5" cy="12.5" r="3.8" fill="#000"/><circle cx="43" cy="12.5" r="3.8" fill="#000"/><circle cx="19.5" cy="27" r="3.8" fill="#000"/><circle cx="35" cy="27" r="3.8" fill="#000"/><rect x="67.6" y="10" width="1.8" height="22" fill="#000"/><rect x="63.5" y="13" width="10" height="4.4" rx="2.2" fill="#000"/><rect x="81.6" y="10" width="1.8" height="22" fill="#000"/><rect x="77.5" y="13" width="10" height="4.4" rx="2.2" fill="#000"/><rect x="95.6" y="10" width="1.8" height="22" fill="#000"/><rect x="91.5" y="13" width="10" height="4.4" rx="2.2" fill="#000"/><rect x="4" y="42" width="102" height="50" fill="#000"/><rect x="17.2" y="42" width="2.8" height="50" fill="#fff"/><rect x="31.7" y="42" width="2.8" height="50" fill="#fff"/><rect x="46.3" y="42" width="2.8" height="50" fill="#fff"/><rect x="60.9" y="42" width="2.8" height="50" fill="#fff"/><rect x="75.4" y="42" width="2.8" height="50" fill="#fff"/><rect x="90.0" y="42" width="2.8" height="50" fill="#fff"/><rect x="14.7" y="42" width="7.8" height="28" fill="#fff"/><rect x="29.2" y="42" width="7.8" height="28" fill="#fff"/><rect x="58.4" y="42" width="7.8" height="28" fill="#fff"/><rect x="72.9" y="42" width="7.8" height="28" fill="#fff"/><rect x="87.5" y="42" width="7.8" height="28" fill="#fff"/></mask></defs><rect x="0" y="0" width="110" height="96" fill="#fff" mask="url(#msk1)"/></svg>
<div class="nm" style="left:934px;background:#6dfda3;color:#000">Synth Layer</div>
<div style="left:1134px;top:508px;width:196px;height:8px;background:#3c3f44"></div>
<div style="left:1134px;top:516px;width:196px;height:2px;background:#181c1e"></div>
<div style="left:1134px;top:518px;width:196px;height:1352px;background:#2d3035"></div>
<div class="pw" style="left:1142px"></div>
<svg style="left:1205px;top:535.0px" width="52" height="52" viewBox="-26 -26 52 52"><path d="M-12.6 -11.8 A17.25 17.25 0 1 0 12.6 -11.8" fill="none" stroke="#00bcf2" stroke-width="7.4" stroke-linecap="round"/><path d="M-0.1 -13.9 V0.2" stroke="#00bcf2" stroke-width="7.5" stroke-linecap="round"/></svg>
<div class="grp" style="left:1142px;top:664px;height:80px"></div>
<div class="cell ms" style="left:1144.6px;top:666.6px;width:85.6px;height:75.2px;border-radius:8px 0 0 8px;line-height:77.2px;padding-right:3px"><span class="g" style="transform:scaleX(1.07)">M</span></div>
<div class="cell ms" style="left:1234px;top:666.6px;width:85.4px;height:75.2px;border-radius:0 8px 8px 0;line-height:77.2px;padding-right:1px"><span class="g">S</span></div>
<div class="slot" style="left:1140px;top:850px">Pro EQ</div>
<div class="grp" style="left:1142px;top:1542px;height:160px"></div>
<div class="cell" style="left:1144.6px;top:1544.6px;width:85.6px;height:75.4px;border-radius:8px 0 0 0"></div>
<div class="cell" style="left:1234px;top:1544.6px;width:85.4px;height:75.4px;border-radius:0 8px 0 0"></div>
<svg style="left:1168.8px;top:1566.8px" width="30" height="30" viewBox="-15 -15 30 30"><circle r="14.1" fill="#c0c1c2"/><path d="M2.3 1.5 L-9.7 -8.8" stroke="#282b30" stroke-width="4.6"/></svg>
<div style="left:1262px;top:1572px;width:12px;height:22px;background:#c3c4c5;border-radius:1.5px"></div>
<div style="left:1276px;top:1572px;width:12px;height:22px;background:#74787b;border-radius:1.5px"></div>
<div class="cell auto" style="left:1144.6px;top:1624px;width:174.8px;height:75.4px;border-radius:0 0 8px 8px;color:#e2e2e2;line-height:78px">Auto: Off</div>
<svg style="left:1178px;top:1733px" width="112" height="112" viewBox="0 0 112 112"><defs><mask id="mx"><rect width="112" height="112" rx="13" fill="#fff"/><rect x="20" y="15" width="12" height="82" rx="6" fill="#000"/><rect x="49.5" y="15" width="12" height="82" rx="6" fill="#000"/><rect x="79" y="15" width="12" height="82" rx="6" fill="#000"/></mask></defs><rect width="112" height="112" fill="#fff" mask="url(#mx)"/><circle cx="26" cy="55" r="12" fill="#fff"/><circle cx="26" cy="55" r="9.8" fill="#2d3035"/><circle cx="55.5" cy="67.5" r="12" fill="#fff"/><circle cx="55.5" cy="67.5" r="9.8" fill="#2d3035"/><circle cx="85" cy="43" r="12" fill="#fff"/><circle cx="85" cy="43" r="9.8" fill="#2d3035"/></svg>
<div class="nm" style="left:1134px;background:#1b1e21;color:#d2d2d2">Pop Chords</div>
<div style="left:1334px;top:508px;width:196px;height:8px;background:#a6fc8e"></div>
<div style="left:1334px;top:516px;width:196px;height:2px;background:#181c1e"></div>
<div style="left:1334px;top:518px;width:196px;height:1352px;background:#344d2f"></div>
<div class="pw" style="left:1342px"></div>
<svg style="left:1405px;top:535.0px" width="52" height="52" viewBox="-26 -26 52 52"><path d="M-12.6 -11.8 A17.25 17.25 0 1 0 12.6 -11.8" fill="none" stroke="#00bcf2" stroke-width="7.4" stroke-linecap="round"/><path d="M-0.1 -13.9 V0.2" stroke="#00bcf2" stroke-width="7.5" stroke-linecap="round"/></svg>
<div class="grp" style="left:1342px;top:664px;height:160px"></div>
<div class="cell ms" style="left:1344.6px;top:666.6px;width:85.6px;height:75.2px;border-radius:8px 0 0 0;line-height:77.2px;padding-right:3px"><span class="g" style="transform:scaleX(1.07)">M</span></div>
<div class="cell ms" style="left:1434px;top:666.6px;width:85.4px;height:75.2px;border-radius:0 8px 0 0;line-height:77.2px;padding-right:1px"><span class="g">S</span></div>
<div class="cell" style="left:1344.6px;top:746px;width:85.6px;height:75.4px;border-radius:0 0 0 8px"></div>
<div class="cell" style="left:1434px;top:746px;width:85.4px;height:75.4px;border-radius:0 0 8px 0"></div>
<svg style="left:1370px;top:768px" width="32" height="32" viewBox="-16 -16 32 32"><circle r="15" fill="#242628"/></svg>
<svg style="left:1456.5px;top:766px" width="40" height="36" viewBox="-20 -18 40 36"><path d="M-16.5 -4.8 L-4 -14 L1.4 -14 L1.4 15.5 L-4 15.5 L-16.5 6 Z" fill="#242628"/><path d="M7.2 -14 Q20.5 0.7 7.2 15.5" fill="none" stroke="#242628" stroke-width="3.2"/></svg>
<div class="slot" style="left:1340px;top:850px">Compressor</div>
<div class="slot" style="left:1340px;top:928px">Fat Channel 1</div>
<div class="slot" style="left:1340px;top:1006px">Fat Channel 2</div>
<div class="slot" style="left:1340px;top:1084px">Pro EQ</div>
<div class="grp" style="left:1342px;top:1542px;height:160px"></div>
<div class="cell" style="left:1344.6px;top:1544.6px;width:85.6px;height:75.4px;border-radius:8px 0 0 0"></div>
<div class="cell" style="left:1434px;top:1544.6px;width:85.4px;height:75.4px;border-radius:0 8px 0 0"></div>
<svg style="left:1368.8px;top:1566.8px" width="30" height="30" viewBox="-15 -15 30 30"><circle r="14.1" fill="#c0c1c2"/><path d="M2.3 1.5 L-9.7 -8.8" stroke="#282b30" stroke-width="4.6"/></svg>
<div style="left:1462px;top:1572px;width:12px;height:22px;background:#c3c4c5;border-radius:1.5px"></div>
<div style="left:1476px;top:1572px;width:12px;height:22px;background:#74787b;border-radius:1.5px"></div>
<div class="cell auto" style="left:1344.6px;top:1624px;width:174.8px;height:75.4px;border-radius:0 0 8px 8px;background:#91ca7f;color:#000;line-height:78px;font-size:27.8px">Read</div>
<svg style="left:1360px;top:1720px" width="150" height="140" viewBox="0 0 1776 1658" fill="#fff"><path d="M705 920 C670 900 670 850 725 790 C745 760 715 738 670 748 C600 770 560 850 525 920 C490 985 420 1005 340 1040 C240 1085 195 1150 205 1230 C215 1310 300 1390 380 1450 C440 1495 520 1500 570 1460 C630 1410 655 1320 680 1260 C700 1215 760 1205 810 1170 C850 1140 870 1100 855 1072 C835 1045 790 1095 750 1088 C715 1080 700 1045 740 1015 L1320 425 L1362 420 C1395 390 1420 340 1445 302 C1490 300 1540 280 1535 240 C1525 200 1480 190 1450 210 L1250 330 L1248 385 Z"/><circle cx="1252" cy="295" r="23"/><circle cx="1312" cy="256" r="23"/><circle cx="1372" cy="217" r="23"/><circle cx="1432" cy="178" r="25"/></svg>
<div class="nm" style="left:1334px;background:#a6fc8e;color:#000">E-Bass</div>
<div style="left:1534px;top:508px;width:196px;height:8px;background:#8eff16"></div>
<div style="left:1534px;top:516px;width:196px;height:2px;background:#181c1e"></div>
<div style="left:1534px;top:518px;width:196px;height:1352px;background:#375020"></div>
<div class="pw" style="left:1542px"></div>
<svg style="left:1605px;top:535.0px" width="52" height="52" viewBox="-26 -26 52 52"><path d="M-12.6 -11.8 A17.25 17.25 0 1 0 12.6 -11.8" fill="none" stroke="#4b4b4b" stroke-width="7.4" stroke-linecap="round"/><path d="M-0.1 -13.9 V0.2" stroke="#4b4b4b" stroke-width="7.5" stroke-linecap="round"/></svg>
<div class="grp" style="left:1542px;top:664px;height:160px"></div>
<div class="cell ms" style="left:1544.6px;top:666.6px;width:85.6px;height:75.2px;border-radius:8px 0 0 0;line-height:77.2px;padding-right:3px"><span class="g" style="transform:scaleX(1.07)">M</span></div>
<div class="cell ms" style="left:1634px;top:666.6px;width:85.4px;height:75.2px;border-radius:0 8px 0 0;line-height:77.2px;padding-right:1px"><span class="g">S</span></div>
<div class="cell" style="left:1544.6px;top:746px;width:85.6px;height:75.4px;border-radius:0 0 0 8px"></div>
<div class="cell" style="left:1634px;top:746px;width:85.4px;height:75.4px;border-radius:0 0 8px 0"></div>
<svg style="left:1570px;top:768px" width="32" height="32" viewBox="-16 -16 32 32"><circle r="15" fill="#242628"/></svg>
<svg style="left:1656.5px;top:766px" width="40" height="36" viewBox="-20 -18 40 36"><path d="M-16.5 -4.8 L-4 -14 L1.4 -14 L1.4 15.5 L-4 15.5 L-16.5 6 Z" fill="#242628"/><path d="M7.2 -14 Q20.5 0.7 7.2 15.5" fill="none" stroke="#242628" stroke-width="3.2"/></svg>
<div class="grp" style="left:1542px;top:1542px;height:160px"></div>
<div class="cell" style="left:1544.6px;top:1544.6px;width:85.6px;height:75.4px;border-radius:8px 0 0 0"></div>
<div class="cell" style="left:1634px;top:1544.6px;width:85.4px;height:75.4px;border-radius:0 8px 0 0"></div>
<svg style="left:1568.8px;top:1566.8px" width="30" height="30" viewBox="-15 -15 30 30"><circle r="14.1" fill="#c0c1c2"/><path d="M2.3 1.5 L-9.7 -8.8" stroke="#282b30" stroke-width="4.6"/></svg>
<div style="left:1662px;top:1572px;width:12px;height:22px;background:#c3c4c5;border-radius:1.5px"></div>
<div style="left:1676px;top:1572px;width:12px;height:22px;background:#74787b;border-radius:1.5px"></div>
<div class="cell auto" style="left:1544.6px;top:1624px;width:174.8px;height:75.4px;border-radius:0 0 8px 8px;color:#e2e2e2;line-height:78px">Auto: Off</div>
<svg style="left:1580px;top:1730px" width="120" height="110" viewBox="0 0 1809 1658"><path d="M1040 600 C990 560 900 545 830 570 C770 595 740 650 715 690 C700 710 670 712 650 716 C665 740 695 770 688 805 C678 850 620 880 560 884 C520 886 495 870 480 850 C478 880 450 900 410 915 C330 950 265 1030 252 1110 C240 1200 290 1300 380 1370 C450 1425 540 1445 610 1425 C690 1400 740 1330 770 1275 C790 1240 810 1225 836 1216 C810 1195 795 1170 805 1135 C820 1085 870 1045 915 1035 C935 1032 950 1036 962 1042 C970 1015 990 995 1030 970 C1090 930 1135 870 1140 800 C1143 740 1120 695 1100 665 Z" fill="#fff"/><path d="M1035 605 L1385 278 L1417 312 L1100 668 Z" fill="#dfe4da"/><path d="M651 994 L1384 286" stroke="#375020" stroke-width="6" stroke-dasharray="9 5" opacity="0.75"/><path d="M665 1008 L1392 294" stroke="#375020" stroke-width="6" stroke-dasharray="9 5" opacity="0.75"/><path d="M679 1022 L1398 300" stroke="#375020" stroke-width="6" stroke-dasharray="9 5" opacity="0.75"/><path d="M693 1036 L1406 308" stroke="#375020" stroke-width="6" stroke-dasharray="9 5" opacity="0.75"/><path d="M350 1290 L400 1340 L490 1240 L600 1160 L628 1122 L548 1058 L505 1110 L470 1180 Z" fill="#375020"/><path d="M628 978 L712 1058" stroke="#375020" stroke-width="22"/><path d="M502 935 C520 975 570 965 600 930 C630 895 660 890 690 905 M805 1000 C815 1040 790 1080 760 1110 C730 1140 715 1170 742 1195" fill="none" stroke="#375020" stroke-width="13" stroke-linecap="round"/><path d="M1385 280 L1468 215 L1440 198 L1478 186 L1500 196 L1522 180 L1536 216 L1514 236 L1526 252 L1490 252 L1417 312 Z" fill="#fff"/><path d="M1285 280 L1385 312 M1440 402 L1402 330 M1492 352 L1430 300" stroke="#fff" stroke-width="14"/><circle cx="1285" cy="280" r="28" fill="#fff"/><circle cx="1440" cy="402" r="27" fill="#fff"/><circle cx="1492" cy="352" r="25" fill="#fff"/><path d="M1335 222 L1395 292" stroke="#fff" stroke-width="20" stroke-linecap="round"/></svg>
<div class="nm" style="left:1534px;background:#8eff16;color:#000">String Sustain</div>
<div style="left:1734px;top:508px;width:196px;height:8px;background:#a6fc8e"></div>
<div style="left:1734px;top:516px;width:196px;height:2px;background:#181c1e"></div>
<div style="left:1734px;top:518px;width:196px;height:1352px;background:#344d2f"></div>
<div class="pw" style="left:1742px"></div>
<svg style="left:1805px;top:535.0px" width="52" height="52" viewBox="-26 -26 52 52"><path d="M-12.6 -11.8 A17.25 17.25 0 1 0 12.6 -11.8" fill="none" stroke="#00bcf2" stroke-width="7.4" stroke-linecap="round"/><path d="M-0.1 -13.9 V0.2" stroke="#00bcf2" stroke-width="7.5" stroke-linecap="round"/></svg>
<div class="grp" style="left:1742px;top:664px;height:160px"></div>
<div class="cell ms" style="left:1744.6px;top:666.6px;width:85.6px;height:75.2px;border-radius:8px 0 0 0;line-height:77.2px;padding-right:3px"><span class="g" style="transform:scaleX(1.07)">M</span></div>
<div class="cell ms" style="left:1834px;top:666.6px;width:85.4px;height:75.2px;border-radius:0 8px 0 0;line-height:77.2px;padding-right:1px"><span class="g">S</span></div>
<div class="cell" style="left:1744.6px;top:746px;width:85.6px;height:75.4px;border-radius:0 0 0 8px"></div>
<div class="cell" style="left:1834px;top:746px;width:85.4px;height:75.4px;border-radius:0 0 8px 0"></div>
<svg style="left:1770px;top:768px" width="32" height="32" viewBox="-16 -16 32 32"><circle r="15" fill="#a0a0a0"/></svg>
<svg style="left:1856.5px;top:766px" width="40" height="36" viewBox="-20 -18 40 36"><path d="M-16.5 -4.8 L-4 -14 L1.4 -14 L1.4 15.5 L-4 15.5 L-16.5 6 Z" fill="#a0a0a0"/><path d="M7.2 -14 Q20.5 0.7 7.2 15.5" fill="none" stroke="#a0a0a0" stroke-width="3.2"/></svg>
<div class="slot" style="left:1740px;top:850px">Room Reverb</div>
<div class="grp" style="left:1742px;top:1542px;height:160px"></div>
<div class="cell" style="left:1744.6px;top:1544.6px;width:85.6px;height:75.4px;border-radius:8px 0 0 0"></div>
<div class="cell" style="left:1834px;top:1544.6px;width:85.4px;height:75.4px;border-radius:0 8px 0 0"></div>
<svg style="left:1768.8px;top:1566.8px" width="30" height="30" viewBox="-15 -15 30 30"><circle r="14.1" fill="#c0c1c2"/><path d="M2.3 1.5 L-9.7 -8.8" stroke="#282b30" stroke-width="4.6"/></svg>
<div style="left:1862px;top:1572px;width:12px;height:22px;background:#c3c4c5;border-radius:1.5px"></div>
<div style="left:1876px;top:1572px;width:12px;height:22px;background:#74787b;border-radius:1.5px"></div>
<div class="cell auto" style="left:1744.6px;top:1624px;width:174.8px;height:75.4px;border-radius:0 0 8px 8px;background:#91ca7f;color:#000;line-height:78px;font-size:27.8px">Read</div>
<svg style="left:1779px;top:1739px" width="110" height="96" viewBox="0 0 110 96"><defs><mask id="msk2"><rect x="0" y="0" width="110" height="96" rx="8" fill="#fff"/><circle cx="12" cy="12.5" r="3.8" fill="#000"/><circle cx="27.5" cy="12.5" r="3.8" fill="#000"/><circle cx="43" cy="12.5" r="3.8" fill="#000"/><circle cx="19.5" cy="27" r="3.8" fill="#000"/><circle cx="35" cy="27" r="3.8" fill="#000"/><rect x="67.6" y="10" width="1.8" height="22" fill="#000"/><rect x="63.5" y="13" width="10" height="4.4" rx="2.2" fill="#000"/><rect x="81.6" y="10" width="1.8" height="22" fill="#000"/><rect x="77.5" y="13" width="10" height="4.4" rx="2.2" fill="#000"/><rect x="95.6" y="10" width="1.8" height="22" fill="#000"/><rect x="91.5" y="13" width="10" height="4.4" rx="2.2" fill="#000"/><rect x="4" y="42" width="102" height="50" fill="#000"/><rect x="17.2" y="42" width="2.8" height="50" fill="#fff"/><rect x="31.7" y="42" width="2.8" height="50" fill="#fff"/><rect x="46.3" y="42" width="2.8" height="50" fill="#fff"/><rect x="60.9" y="42" width="2.8" height="50" fill="#fff"/><rect x="75.4" y="42" width="2.8" height="50" fill="#fff"/><rect x="90.0" y="42" width="2.8" height="50" fill="#fff"/><rect x="14.7" y="42" width="7.8" height="28" fill="#fff"/><rect x="29.2" y="42" width="7.8" height="28" fill="#fff"/><rect x="58.4" y="42" width="7.8" height="28" fill="#fff"/><rect x="72.9" y="42" width="7.8" height="28" fill="#fff"/><rect x="87.5" y="42" width="7.8" height="28" fill="#fff"/></mask></defs><rect x="0" y="0" width="110" height="96" fill="#fff" mask="url(#msk2)"/></svg>
<div class="nm" style="left:1734px;background:#a6fc8e;color:#000">Synth Melody</div>
<div style="left:1934px;top:508px;width:196px;height:8px;background:#a6fc8e"></div>
<div style="left:1934px;top:516px;width:196px;height:2px;background:#181c1e"></div>
<div style="left:1934px;top:518px;width:196px;height:1352px;background:#344d2f"></div>
<div class="pw" style="left:1942px"></div>
<svg style="left:2005px;top:535.0px" width="52" height="52" viewBox="-26 -26 52 52"><path d="M-12.6 -11.8 A17.25 17.25 0 1 0 12.6 -11.8" fill="none" stroke="#4b4b4b" stroke-width="7.4" stroke-linecap="round"/><path d="M-0.1 -13.9 V0.2" stroke="#4b4b4b" stroke-width="7.5" stroke-linecap="round"/></svg>
<div class="grp" style="left:1942px;top:664px;height:160px"></div>
<div class="cell ms" style="left:1944.6px;top:666.6px;width:85.6px;height:75.2px;border-radius:8px 0 0 0;line-height:77.2px;padding-right:3px"><span class="g" style="transform:scaleX(1.07)">M</span></div>
<div class="cell ms" style="left:2034px;top:666.6px;width:85.4px;height:75.2px;border-radius:0 8px 0 0;line-height:77.2px;padding-right:1px"><span class="g">S</span></div>
<div class="cell" style="left:1944.6px;top:746px;width:85.6px;height:75.4px;border-radius:0 0 0 8px"></div>
<div class="cell" style="left:2034px;top:746px;width:85.4px;height:75.4px;border-radius:0 0 8px 0"></div>
<svg style="left:1970px;top:768px" width="32" height="32" viewBox="-16 -16 32 32"><circle r="15" fill="#a0a0a0"/></svg>
<svg style="left:2056.5px;top:766px" width="40" height="36" viewBox="-20 -18 40 36"><path d="M-16.5 -4.8 L-4 -14 L1.4 -14 L1.4 15.5 L-4 15.5 L-16.5 6 Z" fill="#a0a0a0"/><path d="M7.2 -14 Q20.5 0.7 7.2 15.5" fill="none" stroke="#a0a0a0" stroke-width="3.2"/></svg>
<div class="grp" style="left:1942px;top:1542px;height:160px"></div>
<div class="cell" style="left:1944.6px;top:1544.6px;width:85.6px;height:75.4px;border-radius:8px 0 0 0"></div>
<div class="cell" style="left:2034px;top:1544.6px;width:85.4px;height:75.4px;border-radius:0 8px 0 0"></div>
<svg style="left:1968.8px;top:1566.8px" width="30" height="30" viewBox="-15 -15 30 30"><circle r="14.1" fill="#c0c1c2"/><path d="M2.3 1.5 L-9.7 -8.8" stroke="#282b30" stroke-width="4.6"/></svg>
<div style="left:2062px;top:1572px;width:12px;height:22px;background:#c3c4c5;border-radius:1.5px"></div>
<div style="left:2076px;top:1572px;width:12px;height:22px;background:#74787b;border-radius:1.5px"></div>
<div class="cell auto" style="left:1944.6px;top:1624px;width:174.8px;height:75.4px;border-radius:0 0 8px 8px;background:#91ca7f;color:#000;line-height:78px;font-size:27.8px">Read</div>
<svg style="left:1979px;top:1739px" width="110" height="96" viewBox="0 0 110 96"><defs><mask id="msk3"><rect x="0" y="0" width="110" height="96" rx="8" fill="#fff"/><circle cx="12" cy="12.5" r="3.8" fill="#000"/><circle cx="27.5" cy="12.5" r="3.8" fill="#000"/><circle cx="43" cy="12.5" r="3.8" fill="#000"/><circle cx="19.5" cy="27" r="3.8" fill="#000"/><circle cx="35" cy="27" r="3.8" fill="#000"/><rect x="67.6" y="10" width="1.8" height="22" fill="#000"/><rect x="63.5" y="13" width="10" height="4.4" rx="2.2" fill="#000"/><rect x="81.6" y="10" width="1.8" height="22" fill="#000"/><rect x="77.5" y="13" width="10" height="4.4" rx="2.2" fill="#000"/><rect x="95.6" y="10" width="1.8" height="22" fill="#000"/><rect x="91.5" y="13" width="10" height="4.4" rx="2.2" fill="#000"/><rect x="4" y="42" width="102" height="50" fill="#000"/><rect x="17.2" y="42" width="2.8" height="50" fill="#fff"/><rect x="31.7" y="42" width="2.8" height="50" fill="#fff"/><rect x="46.3" y="42" width="2.8" height="50" fill="#fff"/><rect x="60.9" y="42" width="2.8" height="50" fill="#fff"/><rect x="75.4" y="42" width="2.8" height="50" fill="#fff"/><rect x="90.0" y="42" width="2.8" height="50" fill="#fff"/><rect x="14.7" y="42" width="7.8" height="28" fill="#fff"/><rect x="29.2" y="42" width="7.8" height="28" fill="#fff"/><rect x="58.4" y="42" width="7.8" height="28" fill="#fff"/><rect x="72.9" y="42" width="7.8" height="28" fill="#fff"/><rect x="87.5" y="42" width="7.8" height="28" fill="#fff"/></mask></defs><rect x="0" y="0" width="110" height="96" fill="#fff" mask="url(#msk3)"/></svg>
<div class="nm" style="left:1934px;background:#a6fc8e;color:#000">Synth ..mony</div>
<div style="left:2134px;top:508px;width:196px;height:8px;background:#3c3f44"></div>
<div style="left:2134px;top:516px;width:196px;height:2px;background:#181c1e"></div>
<div style="left:2134px;top:518px;width:196px;height:1352px;background:#2d3035"></div>
<div class="pw" style="left:2142px"></div>
<svg style="left:2205px;top:535.0px" width="52" height="52" viewBox="-26 -26 52 52"><path d="M-12.6 -11.8 A17.25 17.25 0 1 0 12.6 -11.8" fill="none" stroke="#00bcf2" stroke-width="7.4" stroke-linecap="round"/><path d="M-0.1 -13.9 V0.2" stroke="#00bcf2" stroke-width="7.5" stroke-linecap="round"/></svg>
<div class="grp" style="left:2142px;top:664px;height:80px"></div>
<div class="cell ms" style="left:2144.6px;top:666.6px;width:85.6px;height:75.2px;border-radius:8px 0 0 8px;line-height:77.2px;padding-right:3px"><span class="g" style="transform:scaleX(1.07)">M</span></div>
<div class="cell ms" style="left:2234px;top:666.6px;width:85.4px;height:75.2px;border-radius:0 8px 8px 0;line-height:77.2px;padding-right:1px"><span class="g">S</span></div>
<div class="slot" style="left:2140px;top:850px">Pro EQ</div>
<div class="grp" style="left:2142px;top:1542px;height:160px"></div>
<div class="cell" style="left:2144.6px;top:1544.6px;width:85.6px;height:75.4px;border-radius:8px 0 0 0"></div>
<div class="cell" style="left:2234px;top:1544.6px;width:85.4px;height:75.4px;border-radius:0 8px 0 0"></div>
<svg style="left:2168.8px;top:1566.8px" width="30" height="30" viewBox="-15 -15 30 30"><circle r="14.1" fill="#c0c1c2"/><path d="M2.3 1.5 L-9.7 -8.8" stroke="#282b30" stroke-width="4.6"/></svg>
<div style="left:2262px;top:1572px;width:12px;height:22px;background:#c3c4c5;border-radius:1.5px"></div>
<div style="left:2276px;top:1572px;width:12px;height:22px;background:#74787b;border-radius:1.5px"></div>
<div class="cell auto" style="left:2144.6px;top:1624px;width:174.8px;height:75.4px;border-radius:0 0 8px 8px;background:#91ca7f;color:#000;line-height:78px;font-size:27.8px">Read</div>
<svg style="left:2179px;top:1739px" width="110" height="96" viewBox="0 0 110 96"><defs><mask id="msk4"><rect x="0" y="0" width="110" height="96" rx="8" fill="#fff"/><circle cx="12" cy="12.5" r="3.8" fill="#000"/><circle cx="27.5" cy="12.5" r="3.8" fill="#000"/><circle cx="43" cy="12.5" r="3.8" fill="#000"/><circle cx="19.5" cy="27" r="3.8" fill="#000"/><circle cx="35" cy="27" r="3.8" fill="#000"/><rect x="67.6" y="10" width="1.8" height="22" fill="#000"/><rect x="63.5" y="13" width="10" height="4.4" rx="2.2" fill="#000"/><rect x="81.6" y="10" width="1.8" height="22" fill="#000"/><rect x="77.5" y="13" width="10" height="4.4" rx="2.2" fill="#000"/><rect x="95.6" y="10" width="1.8" height="22" fill="#000"/><rect x="91.5" y="13" width="10" height="4.4" rx="2.2" fill="#000"/><rect x="4" y="42" width="102" height="50" fill="#000"/><rect x="17.2" y="42" width="2.8" height="50" fill="#fff"/><rect x="31.7" y="42" width="2.8" height="50" fill="#fff"/><rect x="46.3" y="42" width="2.8" height="50" fill="#fff"/><rect x="60.9" y="42" width="2.8" height="50" fill="#fff"/><rect x="75.4" y="42" width="2.8" height="50" fill="#fff"/><rect x="90.0" y="42" width="2.8" height="50" fill="#fff"/><rect x="14.7" y="42" width="7.8" height="28" fill="#fff"/><rect x="29.2" y="42" width="7.8" height="28" fill="#fff"/><rect x="58.4" y="42" width="7.8" height="28" fill="#fff"/><rect x="72.9" y="42" width="7.8" height="28" fill="#fff"/><rect x="87.5" y="42" width="7.8" height="28" fill="#fff"/></mask></defs><rect x="0" y="0" width="110" height="96" fill="#fff" mask="url(#msk4)"/></svg>
<div class="nm" style="left:2134px;background:#1b1e21;color:#d2d2d2">Synth Leads</div>
<div style="left:2334px;top:508px;width:196px;height:8px;background:#a66153"></div>
<div style="left:2334px;top:516px;width:196px;height:2px;background:#181c1e"></div>
<div style="left:2334px;top:518px;width:196px;height:1352px;background:#4e302c"></div>
<div class="pw" style="left:2342px"></div>
<svg style="left:2405px;top:535.0px" width="52" height="52" viewBox="-26 -26 52 52"><path d="M-12.6 -11.8 A17.25 17.25 0 1 0 12.6 -11.8" fill="none" stroke="#00bcf2" stroke-width="7.4" stroke-linecap="round"/><path d="M-0.1 -13.9 V0.2" stroke="#00bcf2" stroke-width="7.5" stroke-linecap="round"/></svg>
<div class="grp" style="left:2342px;top:664px;height:160px"></div>
<div class="cell ms" style="left:2344.6px;top:666.6px;width:85.6px;height:75.2px;border-radius:8px 0 0 0;line-height:77.2px;padding-right:3px"><span class="g" style="transform:scaleX(1.07)">M</span></div>
<div class="cell ms" style="left:2434px;top:666.6px;width:85.4px;height:75.2px;border-radius:0 8px 0 0;line-height:77.2px;padding-right:1px"><span class="g">S</span></div>
<div class="cell" style="left:2344.6px;top:746px;width:85.6px;height:75.4px;border-radius:0 0 0 8px"></div>
<div class="cell" style="left:2434px;top:746px;width:85.4px;height:75.4px;border-radius:0 0 8px 0"></div>
<svg style="left:2370px;top:768px" width="32" height="32" viewBox="-16 -16 32 32"><circle r="15" fill="#242628"/></svg>
<svg style="left:2456.5px;top:766px" width="40" height="36" viewBox="-20 -18 40 36"><path d="M-16.5 -4.8 L-4 -14 L1.4 -14 L1.4 15.5 L-4 15.5 L-16.5 6 Z" fill="#242628"/><path d="M7.2 -14 Q20.5 0.7 7.2 15.5" fill="none" stroke="#242628" stroke-width="3.2"/></svg>
<div class="slot" style="left:2340px;top:850px">Ampire</div>
<div class="slot" style="left:2340px;top:928px">Pro EQ</div>
<div class="slot" style="left:2340px;top:1006px">Chorus</div>
<div class="slot" style="left:2340px;top:1084px">Compressor</div>
<div class="slot" style="left:2340px;top:1162px">Analog Delay</div>
<div class="grp" style="left:2342px;top:1542px;height:160px"></div>
<div class="cell" style="left:2344.6px;top:1544.6px;width:85.6px;height:75.4px;border-radius:8px 0 0 0"></div>
<div class="cell" style="left:2434px;top:1544.6px;width:85.4px;height:75.4px;border-radius:0 8px 0 0"></div>
<svg style="left:2368.8px;top:1566.8px" width="30" height="30" viewBox="-15 -15 30 30"><circle r="14.1" fill="#c0c1c2"/><path d="M2.3 1.5 L-9.7 -8.8" stroke="#282b30" stroke-width="4.6"/></svg>
<div style="left:2462px;top:1572px;width:12px;height:22px;background:#c3c4c5;border-radius:1.5px"></div>
<div style="left:2476px;top:1572px;width:12px;height:22px;background:#74787b;border-radius:1.5px"></div>
<div class="cell auto" style="left:2344.6px;top:1624px;width:174.8px;height:75.4px;border-radius:0 0 8px 8px;background:#91ca7f;color:#000;line-height:78px;font-size:27.8px">Read</div>
<svg style="left:2360px;top:1720px" width="150" height="140" viewBox="0 0 1776 1658" fill="#fff"><path d="M750 835 C700 850 665 770 735 705 C765 675 725 648 670 670 C600 700 570 800 530 860 C480 930 380 930 280 1000 C180 1070 180 1180 240 1270 C300 1360 400 1450 500 1465 C600 1475 670 1370 700 1280 C730 1190 760 1170 830 1135 C890 1105 930 1060 925 1030 C915 990 870 1020 840 1035 C800 1045 745 1000 770 950 L1310 410 L1365 405 L1440 310 C1470 320 1520 300 1518 262 C1515 225 1470 210 1440 225 L1255 305 L1240 350 Z"/><circle cx="1268" cy="302" r="13"/><circle cx="1303" cy="286" r="13"/><circle cx="1338" cy="270" r="13"/><circle cx="1373" cy="253" r="13"/><circle cx="1408" cy="237" r="13"/><circle cx="1443" cy="216" r="13"/></svg>
<div class="nm" style="left:2334px;background:#a66153;color:#ead8d3">Guitar Solo</div>
<div style="left:2534px;top:508px;width:196px;height:8px;background:#2b4862"></div>
<div style="left:2534px;top:516px;width:196px;height:2px;background:#181c1e"></div>
<div style="left:2534px;top:518px;width:196px;height:1352px;background:#21333f"></div>
<div class="pw" style="left:2542px"></div>
<div class="t" style="left:2542px;top:528px;width:94px;height:68px;line-height:67px;font-size:28.5px;color:#62acdf;-webkit-text-stroke:0.7px #0c0c0c">-3.03</div>
<div class="t" style="left:2642px;top:528px;width:94px;height:68px;line-height:67px;font-size:28.5px;color:#62acdf;-webkit-text-stroke:0.7px #0c0c0c">-3.03</div>
<div class="grp" style="left:2542px;top:664px;height:160px"></div>
<div class="cell ms" style="left:2544.6px;top:666.6px;width:85.6px;height:75.2px;border-radius:8px 0 0 0;line-height:77.2px;padding-right:3px"><span class="g" style="transform:scaleX(1.07)">M</span></div>
<div class="cell ms" style="left:2634px;top:666.6px;width:85.4px;height:75.2px;border-radius:0 8px 0 0;line-height:77.2px;padding-right:1px"><span class="g">S</span></div>
<div class="cell" style="left:2544.6px;top:746px;width:85.6px;height:75.4px;border-radius:0 0 0 8px;background:#67b6cf"></div>
<div class="cell" style="left:2634px;top:746px;width:85.4px;height:75.4px;border-radius:0 0 8px 0"></div>
<svg style="left:2564px;top:760px" width="48" height="46" viewBox="0 0 48 46"><path d="M24 8 L41.7 39.8 H6.3 Z" fill="#e2e6e8"/><path d="M10.5 16 L24.8 31.5" stroke="#67b6cf" stroke-width="7.4" stroke-linecap="round"/><path d="M10.5 16 L24.8 31.5" stroke="#e2e6e8" stroke-width="4" stroke-linecap="round"/></svg>
<svg style="left:2646px;top:768px" width="58" height="32" viewBox="0 0 58 32"><circle cx="41.3" cy="16" r="12" fill="none" stroke="#9a9c9b" stroke-width="4.6"/><circle cx="17.2" cy="16" r="14.3" fill="#9a9c9b"/></svg>
<div class="grp" style="left:2542px;top:1542px;height:160px"></div>
<div class="cell" style="left:2544.6px;top:1544.6px;width:85.6px;height:75.4px;border-radius:8px 0 0 0"></div>
<div class="cell" style="left:2634px;top:1544.6px;width:85.4px;height:75.4px;border-radius:0 8px 0 0"></div>
<svg style="left:2568.8px;top:1566.8px" width="30" height="30" viewBox="-15 -15 30 30"><circle r="14.1" fill="#c0c1c2"/><path d="M2.3 1.5 L-9.7 -8.8" stroke="#282b30" stroke-width="4.6"/></svg>
<div style="left:2662px;top:1572px;width:12px;height:22px;background:#c3c4c5;border-radius:1.5px"></div>
<div style="left:2676px;top:1572px;width:12px;height:22px;background:#74787b;border-radius:1.5px"></div>
<div class="cell auto" style="left:2544.6px;top:1624px;width:174.8px;height:75.4px;border-radius:0 0 8px 8px;color:#e2e2e2;line-height:78px">Auto: Off</div>
<svg style="left:2560px;top:1720px" width="150" height="140" viewBox="0 0 1776 1658" fill="#fff"><circle cx="585" cy="285" r="119"/><path d="M450 358 L537 436 L268 702 L208 658 Z"/><path d="M512 196 L690 330" stroke="#21333f" stroke-width="30"/><path d="M1095 213 H1375 V258 H1508 L1521 272 V445 L1440 456 V470 L1110 450 V432 H923 V335 L1010 255 H1095 Z"/><path d="M1012 318 L1420 330 L1425 356 L985 345 Z M960 366 L1420 386 L1415 412 L960 390 Z" fill="#21333f"/><path d="M928 430 L985 430 L966 662 L948 662 Z M1055 440 L1110 450 L1096 572 L1077 572 Z M1385 465 L1440 460 L1419 722 L1399 722 Z M1455 450 L1502 450 L1491 614 L1474 614 Z"/><defs><clipPath id="lgc"><rect x="100" y="1300" width="760" height="168"/></clipPath></defs><path clip-path="url(#lgc)" d="M292 1388 L200 1482 M638 1388 L730 1482" stroke="#fff" stroke-width="34"/><circle cx="465" cy="1225" r="262" fill="#21333f"/><circle cx="465" cy="1225" r="245"/><circle cx="465" cy="1355" r="66" fill="#21333f"/><g transform="translate(825 787) scale(0.461 0.466)"><path d="M750 835 C700 850 665 770 735 705 C765 675 725 648 670 670 C600 700 570 800 530 860 C480 930 380 930 280 1000 C180 1070 180 1180 240 1270 C300 1360 400 1450 500 1465 C600 1475 670 1370 700 1280 C730 1190 760 1170 830 1135 C890 1105 930 1060 925 1030 C915 990 870 1020 840 1035 C800 1045 745 1000 770 950 L1310 410 L1365 405 L1440 310 C1470 320 1520 300 1518 262 C1515 225 1470 210 1440 225 L1255 305 L1240 350 Z"/><circle cx="1268" cy="302" r="13"/><circle cx="1303" cy="286" r="13"/><circle cx="1338" cy="270" r="13"/><circle cx="1373" cy="253" r="13"/><circle cx="1408" cy="237" r="13"/><circle cx="1443" cy="216" r="13"/></g></svg>
<div class="nm" style="left:2534px;background:#2a475f;color:#d4dce4">Main</div>
<div class="t" style="left:2552px;top:840px;width:74px;height:36px;line-height:36px;font-size:26.5px;letter-spacing:0.6px;color:#c6cace;-webkit-text-stroke:0.6px #21333f">0 dB</div>
<div style="left:2648.6px;top:844.5px;width:33.4px;height:31px;background:#393c3f;border-radius:2px"></div>
<div style="left:2650px;top:846px;width:30.6px;height:8px;background:#5bb8ec"></div>
<div style="left:2650px;top:856px;width:30.6px;height:8px;background:#4a4d50"></div>
<div style="left:2650px;top:866px;width:14.5px;height:8px;background:#4a4d50"></div>
<div style="left:2666px;top:866px;width:14.6px;height:8px;background:#4a4d50"></div>
<div style="left:2648.6px;top:878px;width:33.4px;height:606px;background:#222528"></div>
<div style="left:2652px;top:882.3px;width:26px;height:1.6px;background:#1d4a6a"></div>
<div style="left:2652px;top:908.3px;width:26px;height:1.6px;background:#1d4a6a"></div>
<div style="left:2652px;top:962.3px;width:26px;height:1.6px;background:#1d4a6a"></div>
<div style="left:2652px;top:990.3px;width:26px;height:1.6px;background:#1d4a6a"></div>
<div style="left:2652px;top:936px;width:26px;height:2px;background:#a8a8a8"></div>
<div style="left:2666px;top:948px;width:12px;height:2.2px;background:#6bd0f5"></div>
<div style="left:2652px;top:960px;width:12px;height:2.2px;background:#6bd0f5"></div>
<div style="left:2652px;top:1011px;width:12px;height:472px;background:repeating-linear-gradient(180deg,#4eadee 0px,#4eadee 2.5px,#222528 2.5px,#222528 4px)"></div>
<div style="left:2666px;top:1011px;width:12px;height:472px;background:repeating-linear-gradient(180deg,#4eadee 0px,#4eadee 2.5px,#222528 2.5px,#222528 4px)"></div>
<div class="sc" style="top:880.0px">6</div>
<div class="sc" style="top:900.0px">3</div>
<div class="sc" style="top:928.0px">0</div>
<div class="sc" style="top:954.6px">-3</div>
<div class="sc" style="top:982.0px">-6</div>
<div class="sc" style="top:1010.7px">-9</div>
<div class="sc" style="top:1036.7px">-12</div>
<div class="sc" style="top:1146.4px">-24</div>
<div class="sc" style="top:1254.4px">-36</div>
<div class="sc" style="top:1364.3px">-48</div>
<div class="sc" style="top:1468.4px">-60</div>
<div style="left:2572px;top:1070px;width:38px;height:414px;background:#4d5c68"></div>
<div style="left:2576px;top:946.0px;width:12px;height:1.6px;background:#46596a"></div>
<div style="left:2594px;top:946.0px;width:12px;height:1.6px;background:#46596a"></div>
<div style="left:2576px;top:1102.2px;width:12px;height:1.6px;background:#73818c"></div>
<div style="left:2594px;top:1102.2px;width:12px;height:1.6px;background:#73818c"></div>
<div style="left:2576px;top:1167.9px;width:12px;height:1.6px;background:#73818c"></div>
<div style="left:2594px;top:1167.9px;width:12px;height:1.6px;background:#73818c"></div>
<div style="left:2576px;top:1246.1000000000001px;width:12px;height:1.6px;background:#73818c"></div>
<div style="left:2594px;top:1246.1000000000001px;width:12px;height:1.6px;background:#73818c"></div>
<div style="left:2576px;top:1324.2px;width:12px;height:1.6px;background:#73818c"></div>
<div style="left:2594px;top:1324.2px;width:12px;height:1.6px;background:#73818c"></div>
<div style="left:2576px;top:1376.2px;width:12px;height:1.6px;background:#73818c"></div>
<div style="left:2594px;top:1376.2px;width:12px;height:1.6px;background:#73818c"></div>
<div style="left:2576px;top:1418.1000000000001px;width:12px;height:1.6px;background:#73818c"></div>
<div style="left:2594px;top:1418.1000000000001px;width:12px;height:1.6px;background:#73818c"></div>
<div style="left:2588.1px;top:888px;width:5.8px;height:556px;background:#19191b;border-left:1.6px solid #3a3e43;border-right:1.6px solid #3a3e43"></div>
<div style="left:2562.4px;top:969.8px;width:55.2px;height:105.4px;border-radius:7px;background:#13212b;box-shadow:0 0 1.5px rgba(12,22,30,0.9)"></div>
<div style="left:2564.2px;top:971.6px;width:51.6px;height:101.8px;border-radius:5.5px;background:#3f708c"></div>
<div style="left:2567.3px;top:970.4px;width:45.9px;height:103.8px;border-radius:1.5px;background:linear-gradient(180deg,#4d8cae 0%,#5fa8cd 2.5%,#63acd1 6.5%,#4a85a6 9%,#3c6c87 12%,#528fb0 19%,#5a9fc2 24%,#5a9fc2 84%,#4b87a8 89%,#5596b8 91.5%,#62abd0 93%,#62abd0 96.5%,#4b89ab 100%)"></div>
<div style="left:2570px;top:1022px;width:40px;height:3.1px;background:#17181a"></div>
<div style="left:0px;top:1930px;width:2732px;height:4px;background:#000"></div>
<div style="left:0px;top:1934px;width:2732px;height:114px;background:#111518"></div>
<svg style="left:2190px;top:1934px" width="542" height="114" viewBox="0 0 542 114"><path d="M76.5 0 H542 V114 H10 Z" fill="#36393d"/></svg>
<svg style="left:10px;top:1950px" width="180" height="80" viewBox="10 1950 180 80"><path d="M32.0 1980.5 A21.6 21.6 0 1 1 63.5 2010" fill="none" stroke="#fff" stroke-width="4.1"/><path d="M28.55 1975.9 L26.1 1985.2 L36.4 1983.5 Z" fill="#fff" stroke="#fff" stroke-width="0.8" stroke-linejoin="miter"/><path d="M156 1980.5 A21.6 21.6 0 1 0 124.5 2010" fill="none" stroke="#fff" stroke-width="4.1"/><path d="M159.5 1975.9 L161.9 1985.2 L151.6 1983.5 Z" fill="#fff" stroke="#fff" stroke-width="0.8" stroke-linejoin="miter"/></svg>
<svg style="left:626px;top:1978px" width="36" height="36" viewBox="0 0 36 36"><path d="M9.5 28 V7 L30.5 3 V24" fill="none" stroke="#fff" stroke-width="2.2"/><ellipse cx="5.6" cy="28.5" rx="5" ry="3.8" transform="rotate(-20 5.6 28.5)" fill="#fff"/><ellipse cx="26.6" cy="24.5" rx="5" ry="3.8" transform="rotate(-20 26.6 24.5)" fill="#fff"/></svg>
<svg style="left:670px;top:1968px" width="424" height="50" viewBox="0 0 424 50" fill="none" stroke="#dadada" stroke-width="2.05" stroke-linejoin="bevel"><path transform="translate(6.75 5.75)" d="M0 18.55 C0 6 5 0 12.8 0 C20.6 0 25.6 6 25.6 18.55 C25.6 31 20.6 37.1 12.8 37.1 C5 37.1 0 31 0 18.55 Z"/><path transform="translate(40.85 5.75)" d="M0 18.55 C0 6 5 0 12.8 0 C20.6 0 25.6 6 25.6 18.55 C25.6 31 20.6 37.1 12.8 37.1 C5 37.1 0 31 0 18.55 Z"/><path transform="translate(74.95 5.75)" d="M0 18.55 C0 6 5 0 12.8 0 C20.6 0 25.6 6 25.6 18.55 C25.6 31 20.6 37.1 12.8 37.1 C5 37.1 0 31 0 18.55 Z"/><path transform="translate(109.05 5.75)" d="M18.15 37.6 V0 L0 26.75 H24.9"/><path transform="translate(143.75 5.75)" d="M22.4 0 H4.3 L1.6 19.2 C4.5 15 8.5 13 12.5 13 C19.5 13 24 18 24 25 C24 32 19.5 37.1 12.5 37.1 C6 37.1 1 33.5 0 26.5"/><rect x="175.00" y="37.20" width="3.1" height="5.6" fill="#dadada" stroke="none"/><path transform="translate(191.25 5.75)" d="M0 18.55 C0 6 5 0 12.8 0 C20.6 0 25.6 6 25.6 18.55 C25.6 31 20.6 37.1 12.8 37.1 C5 37.1 0 31 0 18.55 Z"/><path transform="translate(226.35 5.75)" d="M0.6 12 C0.6 4.5 5 0 11.5 0 C18 0 22.9 4.5 22.9 10.5 C22.9 17 18 21 12 25 C5 29.5 0.3 32 0 37.1 H23.4"/><rect x="257.20" y="37.20" width="3.1" height="5.6" fill="#dadada" stroke="none"/><path transform="translate(273.05 5.75)" d="M0 18.55 C0 6 5 0 12.8 0 C20.6 0 25.6 6 25.6 18.55 C25.6 31 20.6 37.1 12.8 37.1 C5 37.1 0 31 0 18.55 Z"/><path transform="translate(307.85 5.75)" d="M0.6 12 C0.6 4.5 5 0 11.5 0 C18 0 22.9 4.5 22.9 10.5 C22.9 17 18 21 12 25 C5 29.5 0.3 32 0 37.1 H23.4"/><rect x="338.80" y="37.20" width="3.1" height="5.6" fill="#dadada" stroke="none"/><path transform="translate(356.05 5.75)" d="M0 0 H23.8 C14 11 8.5 23 7 37.6"/><path transform="translate(389.45 5.75)" d="M23.3 8.5 C22 3.5 18 0 12.8 0 C4.5 0 0 8 0 20 C0 31 4.5 37.1 12.8 37.1 C19.8 37.1 24.9 32 24.9 25 C24.9 18 19.8 13 12.8 13 C5.8 13 0.2 17.5 0.2 24.5"/></svg>
<svg style="left:1133px;top:1968px" width="38" height="49" viewBox="0 0 38 49"><path d="M19 0.5 L37.5 17 V46 Q37.5 48.5 35 48.5 H3 Q0.5 48.5 0.5 46 V17 Z" fill="#d8d9db"/><rect x="4.5" y="21.5" width="29" height="23" rx="3" fill="#111518"/><rect x="8" y="24.6" width="22" height="4" rx="2" fill="#d8d9db"/><rect x="8" y="31" width="22" height="4" rx="2" fill="#d8d9db"/><rect x="8" y="37.4" width="22" height="4" rx="2" fill="#d8d9db"/></svg>
<svg style="left:1267px;top:1968px" width="38" height="49" viewBox="0 0 38 49"><path d="M19 0.5 L37.5 17 V46 Q37.5 48.5 35 48.5 H3 Q0.5 48.5 0.5 46 V17 Z" fill="#d8d9db"/><rect x="4.5" y="21.5" width="29" height="23" rx="3" fill="#111518"/><path d="M19 26.5 V39.5 M12.5 33 H25.5" stroke="#d8d9db" stroke-width="3.6" stroke-linecap="round"/></svg>
<svg style="left:1397px;top:1973px" width="46" height="42" viewBox="0 0 46 42"><rect x="0.8" y="1" width="7.4" height="40" rx="3.5" fill="#d8d9db"/><path d="M10.5 21 L42 2.5 Q44 1.5 44 4 V38 Q44 40.5 42 39.5 Z" fill="#d8d9db"/></svg>
<div style="left:1533.5px;top:1974px;width:41px;height:40px;background:#d8d9db"></div>
<svg style="left:1672px;top:1972px" width="40" height="44" viewBox="0 0 40 44"><path d="M2 4 Q2 1 4.6 2.4 L35.5 20 Q37.5 22 35.5 24 L4.6 41.6 Q2 43 2 40 Z" fill="#28d953"/></svg>
<svg style="left:1785px;top:1971px" width="42" height="42" viewBox="-21 -21 42 42"><circle r="20" fill="#d8d9db"/></svg>
<svg style="left:1890px;top:1960px" width="84" height="62" viewBox="1890 1960 84 62"><path d="M1925.7 1995.4 L1920.4 2009.7 H1920.1 A17.75 17.75 0 0 1 1920.1 1974.2 H1943.8 A17.75 17.75 0 0 1 1943.8 2009.7 H1934.6 L1941.7 1995.4" fill="none" stroke="#4d90d9" stroke-width="5" stroke-linecap="round" stroke-linejoin="miter" stroke-miterlimit="6"/></svg>
<div class="t" style="left:2026px;top:1953px;width:100px;height:36px;line-height:36px;font-size:28px;color:#cdcdcd;-webkit-text-stroke:0.7px #111518">124.00</div>
<div class="t" style="left:2026px;top:1992px;width:100px;height:36px;line-height:36px;font-size:27px;color:#cdcdcd;-webkit-text-stroke:0.7px #111518;word-spacing:8.5px">4 <span style="position:relative;top:4px">/</span> 4</div>
<div class="t" style="left:2297px;top:1955.5px;width:40px;height:70px;line-height:70px;font-size:64.5px;font-family:'Liberation Serif',serif;color:#dcdcdc;text-align:left;-webkit-text-stroke:0.9px #dcdcdc">L</div>
<div style="left:2413.7px;top:1967px;width:4.2px;height:45.7px;background:#4a90e2;border-radius:2.1px"></div>
<div style="left:2441.9px;top:1967px;width:4.2px;height:45.7px;background:#4a90e2;border-radius:2.1px"></div>
<div style="left:2401.9px;top:1974.7px;width:28.1px;height:12px;background:#4a90e2;border-radius:4.5px"></div>
<div style="left:2430px;top:1989px;width:28px;height:12.3px;background:#4a90e2;border-radius:4.5px"></div>
<div style="left:2516px;top:1966px;width:26.6px;height:12.4px;background:#d8d9db;border-radius:2.5px"></div>
<div style="left:2516px;top:1983.8px;width:26.6px;height:12.4px;background:#d8d9db;border-radius:2.5px"></div>
<div style="left:2516px;top:2001.6px;width:26.6px;height:12.4px;background:#d8d9db;border-radius:2.5px"></div>
<div style="left:2550px;top:1966px;width:26.6px;height:12.4px;background:#d8d9db;border-radius:2.5px"></div>
<div style="left:2550px;top:1983.8px;width:26.6px;height:12.4px;background:#d8d9db;border-radius:2.5px"></div>
<div style="left:2550px;top:2001.6px;width:26.6px;height:12.4px;background:#d8d9db;border-radius:2.5px"></div>
<svg style="left:2626px;top:1960px" width="64" height="62" viewBox="2626 1960 64 62"><path d="M2636.8 1989.3 L2657.35 1971.2 L2677.9 1989.3 V2008.2 Q2677.9 2011.7 2674.4 2011.7 H2640.3 Q2636.8 2011.7 2636.8 2008.2 Z" fill="none" stroke="#d8d9db" stroke-width="6.6" stroke-linejoin="round"/></svg>
</body></html>
